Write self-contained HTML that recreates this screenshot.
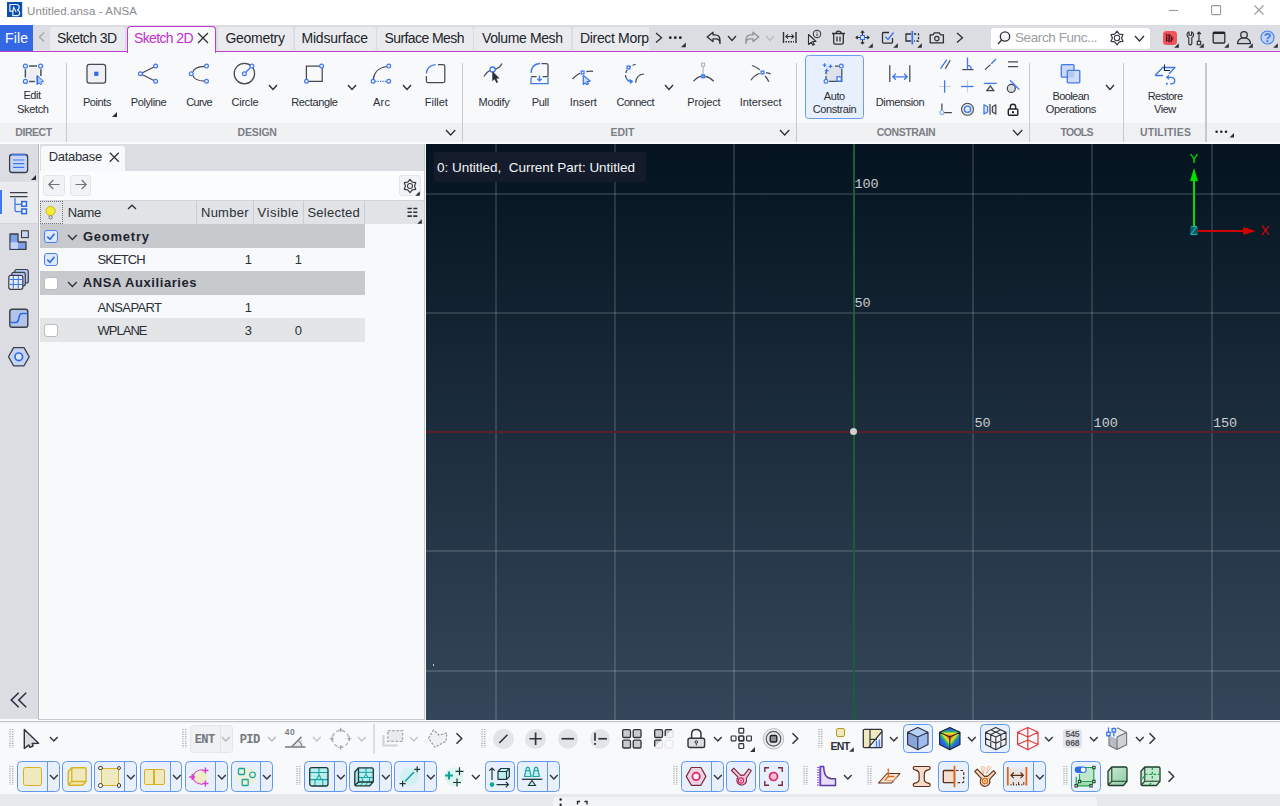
<!DOCTYPE html>
<html><head><meta charset="utf-8"><title>Untitled.ansa - ANSA</title>
<style>
html,body{margin:0;padding:0;}
body{width:1280px;height:806px;position:relative;overflow:hidden;background:#f8f9fb;font-family:"Liberation Sans",sans-serif;}
.b{position:absolute;box-sizing:border-box;}
.t{position:absolute;white-space:pre;}
svg{overflow:visible;}
</style></head><body>
<div class="b" style="left:0px;top:0px;width:1280px;height:25px;background:#ffffff;"></div>
<div class="b" style="left:0px;top:25px;width:1280px;height:26px;background:#dbdde2;"></div>
<div class="b" style="left:0px;top:49.7px;width:1280px;height:1px;background:#e6e9ec;"></div>
<div class="b" style="left:0px;top:50.7px;width:1280px;height:1.4px;background:#c43bd0;"></div>
<div class="b" style="left:0px;top:52px;width:1280px;height:71px;background:#f8f9fb;"></div>
<div class="b" style="left:0px;top:123px;width:1280px;height:19px;background:#f0f1f3;"></div>
<div class="b" style="left:0px;top:142px;width:1280px;height:2px;background:#fbfbfc;"></div>
<div class="b" style="left:0px;top:144px;width:38px;height:575.2px;background:#dbdde2;"></div>
<div class="b" style="left:38px;top:144px;width:388px;height:576px;background:#f8f9fb;"></div>
<div class="b" style="left:0px;top:720px;width:1280px;height:74px;background:#f8f9fb;"></div>
<div class="b" style="left:0px;top:794px;width:1280px;height:12px;background:#e4e5e8;"></div>
<svg class="b" style="left:6.7px;top:2px;" width="15.2" height="15" viewBox="0 0 15.2 15" fill="none"><rect width="15.200" height="15" fill="#0a4fae"/>
<path d="M2.900 2.500h6c2.200 0 3.300 1.200 3.300 2.800 0 1.300-.6 2.200-1.800 2.700 1.600.5 2.300 1.500 2.300 2.900 0 1.800-1.400 2.800-3.600 2.800H5.800V9.200H2.900z" stroke="#f2f6fc" stroke-width="1.150" stroke-linejoin="round"/>
<path d="M5.800 9.600l.9-4.300 2.500 4.700" stroke="#f2f6fc" stroke-width="1.100"/></svg>
<div class="t" style="left:27px;top:4.81px;font-size:11.5px;line-height:13.22px;color:#8a8c90;font-weight:normal;font-family:'Liberation Sans', sans-serif;"><span id="t1" style="letter-spacing:0.104px">Untitled.ansa - ANSA</span></div>
<svg class="b" style="left:1168px;top:4px;" width="100" height="14" viewBox="0 0 100 14" fill="none"><path d="M1 6.500h9" stroke="#9a9a9a" stroke-width="1.100"/>
<rect x="43.600" y="1.600" width="9" height="9" rx="0.800" stroke="#9a9a9a" stroke-width="1.100"/>
<path d="M86.500 1.500l9 9M95.500 1.500l-9 9" stroke="#9a9a9a" stroke-width="1.100"/></svg>
<div class="b" style="left:0px;top:25px;width:33px;height:26px;background:#3367e3;"></div>
<div class="t" style="left:5px;top:29.90px;font-size:14px;line-height:16.1px;color:#ffffff;font-weight:normal;font-family:'Liberation Sans', sans-serif;"><span id="t2" style="letter-spacing:0.146px">File</span></div>
<svg class="b" style="left:38px;top:31px;" width="8" height="12" viewBox="0 0 8 12" fill="none"><path d="M6 1.500L1.500 6l4.500 4.500" stroke="#a3a6ab" stroke-width="1.300"/></svg>
<div class="b" style="left:50px;top:27px;width:74.5px;height:22.5px;background:#eaebee;border-radius:3px;"></div>
<div class="t" style="left:57px;top:29.90px;font-size:14px;line-height:16.1px;color:#22252b;font-weight:normal;font-family:'Liberation Sans', sans-serif;"><span id="t3" style="letter-spacing:-0.574px">Sketch 3D</span></div>
<div class="b" style="left:217.5px;top:27px;width:75.0px;height:22.5px;background:#eaebee;border-radius:3px;"></div>
<div class="t" style="left:225.5px;top:29.90px;font-size:14px;line-height:16.1px;color:#22252b;font-weight:normal;font-family:'Liberation Sans', sans-serif;"><span id="t4" style="letter-spacing:-0.282px">Geometry</span></div>
<div class="b" style="left:294.5px;top:27px;width:81.0px;height:22.5px;background:#eaebee;border-radius:3px;"></div>
<div class="t" style="left:301.5px;top:29.90px;font-size:14px;line-height:16.1px;color:#22252b;font-weight:normal;font-family:'Liberation Sans', sans-serif;"><span id="t5" style="letter-spacing:-0.219px">Midsurface</span></div>
<div class="b" style="left:377px;top:27px;width:95.5px;height:22.5px;background:#eaebee;border-radius:3px;"></div>
<div class="t" style="left:384.5px;top:29.90px;font-size:14px;line-height:16.1px;color:#22252b;font-weight:normal;font-family:'Liberation Sans', sans-serif;"><span id="t6" style="letter-spacing:-0.580px">Surface Mesh</span></div>
<div class="b" style="left:474px;top:27px;width:96.5px;height:22.5px;background:#eaebee;border-radius:3px;"></div>
<div class="t" style="left:482px;top:29.90px;font-size:14px;line-height:16.1px;color:#22252b;font-weight:normal;font-family:'Liberation Sans', sans-serif;"><span id="t7" style="letter-spacing:-0.383px">Volume Mesh</span></div>
<div class="b" style="left:572.5px;top:27px;width:76.5px;height:22.5px;background:#eaebee;border-radius:3px 0 0 3px;"></div>
<div class="t" style="left:580px;top:29.90px;font-size:14px;line-height:16.1px;color:#22252b;font-weight:normal;font-family:'Liberation Sans', sans-serif;"><span id="t8" style="letter-spacing:-0.335px">Direct Morp</span></div>
<div class="b" style="left:126.5px;top:25.5px;width:89.5px;height:27px;background:#f8f9fb;border:1.300px solid #c43bd0;border-bottom:none;border-radius:4px 4px 0 0;"></div>
<div class="t" style="left:134px;top:29.90px;font-size:14px;line-height:16.1px;color:#c130cf;font-weight:normal;font-family:'Liberation Sans', sans-serif;"><span id="t9" style="letter-spacing:-0.637px">Sketch 2D</span></div>
<svg class="b" style="left:197px;top:32px;" width="12" height="12" viewBox="0 0 12 12" fill="none"><path d="M1 1l10 10M11 1L1 11" stroke="#2b2f36" stroke-width="1.300"/></svg>
<svg class="b" style="left:654px;top:32px;" width="10" height="12" viewBox="0 0 10 12" fill="none"><path d="M2 1l5.500 4.700L2 10.500" stroke="#2b2f36" stroke-width="1.300"/></svg>
<svg class="b" style="left:668px;top:34px;" width="20" height="14" viewBox="0 0 20 14" fill="none"><circle cx="2.300" cy="3.700" r="1.400" fill="#1d2026"/><circle cx="7.300" cy="3.700" r="1.400" fill="#1d2026"/><circle cx="12.300" cy="3.700" r="1.400" fill="#1d2026"/><path d="M17.800 8.500v4.800h-4.800z" fill="#2b2f36"/></svg>
<svg class="b" style="left:706px;top:31px;" width="16" height="14" viewBox="0 0 16 14" fill="none"><path d="M7 1.200L1.200 6 7 10.500V7.800h3.200c2.300 0 3.600 1.600 3.800 4.700V9.200C14 5.800 12.300 3.800 9.300 3.800H7z" stroke="#2b2f36" stroke-width="1.300" stroke-linejoin="round"/></svg>
<svg class="b" style="left:727.0px;top:35.25px;" width="10" height="6.5" viewBox="0 0 10 6.5" fill="none"><path d="M1 1l4.0 4.5 4.0 -4.5" stroke="#2b2f36" stroke-width="1.3"/></svg>
<svg class="b" style="left:744px;top:31px;" width="16" height="14" viewBox="0 0 16 14" fill="none"><path d="M9 1.200L14.800 6 9 10.500V7.800H5.800C3.500 7.800 2.200 9.400 2 12.500V9.200C2 5.800 3.700 3.800 6.700 3.800H9z" stroke="#8d9096" stroke-width="1.300" stroke-linejoin="round"/></svg>
<svg class="b" style="left:764.5px;top:35.25px;" width="10" height="6.5" viewBox="0 0 10 6.5" fill="none"><path d="M1 1l4.0 4.5 4.0 -4.5" stroke="#b9bbc0" stroke-width="1.3"/></svg>
<svg class="b" style="left:782px;top:31px;" width="16" height="13" viewBox="0 0 16 13" fill="none"><path d="M1.500 1v11M14 1v11" stroke="#2b2f36" stroke-width="1.400"/><path d="M4 5.500h7.500M6 3.300L3.800 5.500 6 7.700M9.500 3.300l2.200 2.200-2.200 2.200" stroke="#2b2f36" stroke-width="1.100"/><path d="M3.500 10.800h8.500" stroke="#2b2f36" stroke-width="1.400" stroke-dasharray="1.500 1"/></svg>
<svg class="b" style="left:806px;top:29px;" width="17" height="17" viewBox="0 0 17 17" fill="none"><path d="M2.500 5.500v10l2.800-2.300 1.600 3 1.400-.7-1.600-3h3.300z" stroke="#2b2f36" stroke-width="1.100" fill="#dcdde1" stroke-linejoin="round"/><circle cx="11" cy="5" r="3.800" stroke="#2b2f36" stroke-width="1" fill="#dcdde1"/><path d="M11 4.500v2.700" stroke="#2b2f36" stroke-width="1"/><circle cx="11" cy="3" r=".6" fill="#2b2f36"/></svg>
<svg class="b" style="left:831px;top:30px;" width="15" height="15" viewBox="0 0 15 15" fill="none"><path d="M1 3.500h13M5 3.300c0-1.400.9-2.100 2.500-2.100s2.500.7 2.500 2.100M2.700 3.700v8.800c0 1 .6 1.600 1.600 1.600h6.400c1 0 1.600-.6 1.600-1.600V3.700" stroke="#2b2f36" stroke-width="1.300"/><path d="M6 6.500v5M9 6.500v5" stroke="#2b2f36" stroke-width="1.300"/></svg>
<svg class="b" style="left:855px;top:30px;" width="15" height="15" viewBox="0 0 15 15" fill="none"><path d="M7.500 1v13M1 7.500h13" stroke="#2b2f36" stroke-width="1.100"/><path d="M5.800 2.800L7.500 1l1.700 1.800M5.800 12.200L7.500 14l1.700-1.800M2.800 5.800L1 7.500l1.800 1.700M12.200 5.800L14 7.500l-1.800 1.700" stroke="#2b2f36" stroke-width="1.100"/><rect x="5.500" y="5.500" width="4" height="4" fill="#dfe8fb" stroke="#3c74ea" stroke-width="1.100"/></svg>
<svg class="b" style="left:868px;top:42.5px;" width="5" height="5" viewBox="0 0 5 5" fill="none"><path d="M4.800 0.200v4.600H0.200z" fill="#2b2f36"/></svg>
<svg class="b" style="left:881px;top:30px;" width="15" height="15" viewBox="0 0 15 15" fill="none"><path d="M11.500 8v4c0 .8-.4 1.200-1.200 1.200H2.700c-.8 0-1.200-.4-1.200-1.200V3.700c0-.8.400-1.200 1.200-1.200H8" stroke="#2b2f36" stroke-width="1.300"/><path d="M4.300 6.800L7 9.500l5.500-7" stroke="#3c74ea" stroke-width="1.300"/></svg>
<svg class="b" style="left:892.5px;top:42.5px;" width="5" height="5" viewBox="0 0 5 5" fill="none"><path d="M4.800 0.200v4.600H0.200z" fill="#2b2f36"/></svg>
<svg class="b" style="left:904px;top:30px;" width="17" height="15" viewBox="0 0 17 15" fill="none"><path d="M7 4H2v7h5" stroke="#2b2f36" stroke-width="1.300"/><path d="M10 4h4.500v7H10" stroke="#2b2f36" stroke-width="1.300" stroke-dasharray="2.200 1.600"/><path d="M8.300 1v13.500" stroke="#3c74ea" stroke-width="1.800"/></svg>
<svg class="b" style="left:917px;top:42.5px;" width="5" height="5" viewBox="0 0 5 5" fill="none"><path d="M4.800 0.200v4.600H0.200z" fill="#2b2f36"/></svg>
<svg class="b" style="left:929px;top:31px;" width="16" height="13" viewBox="0 0 16 13" fill="none"><path d="M1.200 3.800h3l1.100-2h5l1.100 2h3v8H1.200z" stroke="#2b2f36" stroke-width="1.300" stroke-linejoin="round"/><circle cx="7.800" cy="7.600" r="2.200" stroke="#2b2f36" stroke-width="1.200"/></svg>
<svg class="b" style="left:955px;top:32px;" width="10" height="12" viewBox="0 0 10 12" fill="none"><path d="M2 1l5.500 4.700L2 10.500" stroke="#2b2f36" stroke-width="1.300"/></svg>
<div class="b" style="left:991px;top:28px;width:159px;height:20.5px;background:#ffffff;border-radius:3px;"></div>
<svg class="b" style="left:997px;top:30px;" width="14" height="15" viewBox="0 0 14 15" fill="none"><circle cx="8" cy="6.500" r="4.700" stroke="#2b2f36" stroke-width="1.300" fill="#f4f5f7"/><path d="M4.600 10L1 14" stroke="#2b2f36" stroke-width="1.300"/></svg>
<div class="t" style="left:1015px;top:30.36px;font-size:13.5px;line-height:15.52px;color:#9a9da3;font-weight:normal;font-family:'Liberation Sans', sans-serif;"><span id="t10" style="letter-spacing:-0.407px">Search Func...</span></div>
<svg class="b" style="left:1108.8px;top:29.8px;" width="16" height="16" viewBox="0 0 16 16" fill="none"><path d="M8.00,1.10L10.30,4.02L13.98,4.55L12.60,8.00L13.98,11.45L10.30,11.98L8.00,14.90L5.70,11.98L2.02,11.45L3.40,8.00L2.02,4.55L5.70,4.02z" stroke="#3a3e46" stroke-width="1.250" stroke-linejoin="round"/><circle cx="8" cy="8" r="2.700" stroke="#3a3e46" stroke-width="1.100"/></svg>
<svg class="b" style="left:1134.0px;top:35.0px;" width="11" height="7" viewBox="0 0 11 7" fill="none"><path d="M1 1l4.5 5 4.5 -5" stroke="#2b2f36" stroke-width="1.3"/></svg>
<div class="b" style="left:1162.5px;top:31px;width:14px;height:13.5px;background:#f2545c;border-radius:3.500px;"></div>
<svg class="b" style="left:1165px;top:33px;" width="10" height="10" viewBox="0 0 10 10" fill="none"><path d="M1 1l7 6M1 3.500l6 5M1 6l4 3.200M3.500 1l5 4.300M1.500 1v8M4 2.500v6.500M6.500 4.500v4.500" stroke="#4a0c12" stroke-width="1.150" stroke-dasharray="1.400 .5"/></svg>
<svg class="b" style="left:1174px;top:42.5px;" width="5" height="5" viewBox="0 0 5 5" fill="none"><path d="M4.800 0.200v4.600H0.200z" fill="#2b2f36"/></svg>
<svg class="b" style="left:1186px;top:30px;" width="18" height="16" viewBox="0 0 18 16" fill="none"><path d="M3 1.800v3.400h2.600V1.800c1.200.5 2 1.600 2 3 0 1.300-.7 2.300-1.800 2.800v6c0 .8-.5 1.300-1.500 1.300s-1.500-.5-1.500-1.300v-6C1.700 7.100 1 6.100 1 4.800c0-1.400.8-2.500 2-3z" stroke="#2b2f36" stroke-width="1.150" stroke-linejoin="round"/><path d="M13 2v9.500M11.200 4L13 2l1.800 2" stroke="#2b2f36" stroke-width="1.150"/><rect x="11.300" y="11.300" width="3.400" height="3.400" stroke="#2b2f36" stroke-width="1.150"/></svg>
<svg class="b" style="left:1199px;top:42.5px;" width="5" height="5" viewBox="0 0 5 5" fill="none"><path d="M4.800 0.200v4.600H0.200z" fill="#2b2f36"/></svg>
<svg class="b" style="left:1212px;top:31px;" width="15" height="14" viewBox="0 0 15 14" fill="none"><rect x="1.200" y="1.200" width="11.600" height="10.800" rx="1" stroke="#2b2f36" stroke-width="1.300" fill="#d0d3da"/><path d="M1.200 2h11.600" stroke="#1d2026" stroke-width="2"/></svg>
<svg class="b" style="left:1224px;top:42.5px;" width="5" height="5" viewBox="0 0 5 5" fill="none"><path d="M4.800 0.200v4.600H0.200z" fill="#2b2f36"/></svg>
<svg class="b" style="left:1236px;top:30px;" width="16" height="15" viewBox="0 0 16 15" fill="none"><circle cx="8" cy="4.800" r="3.300" stroke="#2b2f36" stroke-width="1.250" fill="#d0d3da"/><path d="M1.500 13.500c.3-3 2.400-4.700 4-5.300h5c1.600.6 3.700 2.300 4 5.300z" stroke="#2b2f36" stroke-width="1.250" fill="#d0d3da" stroke-linejoin="round"/></svg>
<svg class="b" style="left:1248px;top:42.5px;" width="5" height="5" viewBox="0 0 5 5" fill="none"><path d="M4.800 0.200v4.600H0.200z" fill="#2b2f36"/></svg>
<svg class="b" style="left:1260px;top:30px;" width="15" height="15" viewBox="0 0 15 15" fill="none"><circle cx="7.500" cy="7.500" r="6.500" stroke="#4a80ee" stroke-width="1.200" fill="#c5d3f2"/></svg>
<div class="t" style="left:1067.6px;width:400px;text-align:center;top:30.78px;font-size:12.5px;line-height:14.37px;color:#3c74ea;font-weight:bold;font-family:'Liberation Sans', sans-serif;">?</div>
<svg class="b" style="left:1273px;top:42.5px;" width="5" height="5" viewBox="0 0 5 5" fill="none"><path d="M4.800 0.200v4.600H0.200z" fill="#2b2f36"/></svg>
<div class="b" style="left:65.9px;top:62.5px;width:1.2px;height:79px;background:#c6c9ce;"></div>
<div class="b" style="left:461.9px;top:62.5px;width:1.2px;height:79px;background:#c6c9ce;"></div>
<div class="b" style="left:795.9px;top:62.5px;width:1.2px;height:79px;background:#c6c9ce;"></div>
<div class="b" style="left:1028.9px;top:62.5px;width:1.2px;height:79px;background:#c6c9ce;"></div>
<div class="b" style="left:1122.9px;top:62.5px;width:1.2px;height:79px;background:#c6c9ce;"></div>
<div class="b" style="left:1205.4px;top:62.5px;width:1.2px;height:79px;background:#c6c9ce;"></div>
<svg class="b" style="left:0px;top:52px;" width="1280" height="72" viewBox="0 0 1280 72" fill="none">
<rect x="27.400" y="16" width="11.200" height="11.600" fill="#eceef1"/>
<path d="M28.900 14.100h8.100M25.400 17.300v8.300M28.900 29.400h6M40.900 17.300v6.700" stroke="#4b505c" stroke-width="1.500"/>
<circle cx="25.4" cy="14.1" r="2" stroke="#3f78ee" stroke-width="1.2" fill="#eef2fd"/><circle cx="40.6" cy="14.1" r="2" stroke="#3f78ee" stroke-width="1.2" fill="#eef2fd"/><circle cx="25.4" cy="29.4" r="2" stroke="#3f78ee" stroke-width="1.2" fill="#eef2fd"/>
<path d="M37.300 23.700v8.700l2-1.500 1.300 1.700 1.300-.9-1-1.700 2.900-.6z" fill="#b4c9f6" stroke="#3f78ee" stroke-width="1" stroke-linejoin="round"/>
<path d="M37.300 23.700v8.700" stroke="#2f6be8" stroke-width="1.500"/>
<!-- Points -->
<rect x="87" y="12.400" width="18.600" height="18.600" rx="2.300" fill="#eef0f3" stroke="#454952" stroke-width="1.25" stroke-width="1.400"/>
<rect x="94.200" y="19.700" width="4.200" height="4.200" fill="#2f6be8"/>
<path d="M117 60v5h-5z" fill="#2b2f36"/>
<!-- Polyline -->
<path d="M153.900 15L142 21M142 22.500L153.900 28.500" stroke="#454952" stroke-width="1.25"/>
<circle cx="155.6" cy="14.1" r="1.9" stroke="#3f78ee" stroke-width="1.2" fill="#eef2fd"/><circle cx="140.4" cy="21.75" r="1.9" stroke="#3f78ee" stroke-width="1.2" fill="#eef2fd"/><circle cx="155.6" cy="29.3" r="1.9" stroke="#3f78ee" stroke-width="1.2" fill="#eef2fd"/>
<!-- Curve -->
<path d="M204.600 14.300C197 14.600 193.500 17.500 193 20M193 23.500C193.500 26 197 28.800 204.600 29.100" stroke="#454952" stroke-width="1.25"/>
<circle cx="206.5" cy="14.1" r="1.9" stroke="#3f78ee" stroke-width="1.2" fill="#eef2fd"/><circle cx="191.25" cy="21.75" r="1.9" stroke="#3f78ee" stroke-width="1.2" fill="#eef2fd"/><circle cx="206.5" cy="29.3" r="1.9" stroke="#3f78ee" stroke-width="1.2" fill="#eef2fd"/>
<!-- Circle -->
<circle cx="244.400" cy="21.600" r="10.200" stroke="#454952" stroke-width="1.25"/>
<path d="M245.800 20.300L250.500 15.500" stroke="#3f78ee" stroke-width="1.3"/>
<circle cx="244.4" cy="21.75" r="1.9" stroke="#3f78ee" stroke-width="1.2" fill="#eef2fd"/><circle cx="251.9" cy="14.1" r="1.9" stroke="#3f78ee" stroke-width="1.2" fill="#eef2fd"/>
<!-- Rectangle -->
<path d="M319.700 14.100H306.400V27.300M308.500 29.300H322.200V16" stroke="#454952" stroke-width="1.25" stroke-width="1.400"/>
<circle cx="321.6" cy="14.1" r="1.9" stroke="#3f78ee" stroke-width="1.2" fill="#eef2fd"/><circle cx="306.5" cy="29.3" r="1.9" stroke="#3f78ee" stroke-width="1.2" fill="#eef2fd"/>
<!-- Arc -->
<path d="M373.300 27.300C374 20.500 379 15.500 386.800 14.500" stroke="#454952" stroke-width="1.25"/>
<path d="M375.200 29.300H386.800" stroke="#3f78ee" stroke-width="1.3" stroke-width="1.500" stroke-dasharray="1.300 1.100"/>
<circle cx="388.75" cy="14.1" r="1.9" stroke="#3f78ee" stroke-width="1.2" fill="#eef2fd"/><circle cx="373.1" cy="29.3" r="1.9" stroke="#3f78ee" stroke-width="1.2" fill="#eef2fd"/><circle cx="388.75" cy="29.3" r="1.9" stroke="#3f78ee" stroke-width="1.2" fill="#eef2fd"/>
<!-- Fillet -->
<path d="M438 12.700h5c1.200 0 1.800.6 1.800 1.800v14.400c0 1.200-.6 1.800-1.800 1.800h-14.800c-1.200 0-1.800-.6-1.800-1.800V24" stroke="#454952" stroke-width="1.25" stroke-width="1.400"/>
<path d="M426.400 21.500C426.800 16.500 430 13.200 435.500 12.700" stroke="#3f78ee" stroke-width="1.3" stroke-width="1.500"/>
<!-- Modify -->
<path d="M484 24.500C486 21 488.500 19 490.500 18.300M494.800 17.300C498 16.500 500.500 14.500 502 11.400" stroke="#454952" stroke-width="1.25" stroke-width="1.200"/>
<circle cx="492.600" cy="17.600" r="2.600" stroke="#3f78ee" stroke-width="1.3" stroke-width="1.200" fill="none"/>
<path d="M492.300 19v10.300l2.300-2 1.800 3.700 1.700-.8-1.700-3.600h3.200z" fill="#2b2f36"/>
<!-- Pull -->
<path d="M541.500 11.500h4.700c1.200 0 1.800.6 1.800 1.800V24.500" stroke="#454952" stroke-width="1.25" stroke-width="1.400"/>
<path d="M531 24.500h5.500M542.500 24.500H548" stroke="#454952" stroke-width="1.25" stroke-width="1.400"/>
<path d="M531 21C531.200 15.500 534.500 11.800 540 11.500" stroke="#3f78ee" stroke-width="1.3" stroke-width="1.400"/>
<path d="M531 25.500v6.200h17v-6.200" stroke="#3f78ee" stroke-width="1.3" stroke-width="1.400"/>
<path d="M539.500 23.500v5M537.300 26.700l2.200 2.200 2.200-2.200" stroke="#3f78ee" stroke-width="1.3" stroke-width="1.200"/>
<!-- Insert -->
<path d="M572.500 27C575 24.500 577.500 22.500 580 21.300M586.300 19.600C588.500 19.200 590.500 19.100 593 19.300" stroke="#454952" stroke-width="1.25" stroke-width="1.200"/>
<rect x="581.200" y="19.100" width="2.800" height="2.800" fill="#fff" stroke="#3f78ee" stroke-width="1.3" stroke-width="1.100"/>
<path d="M583.300 23.500v9l2.200-1.700 1.500 1.800 1.500-1-1.300-2 3-.6z" fill="#d5e1fb" stroke="#3f78ee" stroke-width="1.3" stroke-width="1.100" stroke-linejoin="round"/>
<!-- Connect -->
<path d="M635.800 12.500C631 13 626 17 625.500 22.500 625.400 24 625.700 25.200 626.200 26" stroke="#454952" stroke-width="1.25" stroke-width="1.300" stroke-dasharray="3.300 2"/>
<rect x="627.100" y="14.100" width="2.800" height="2.800" fill="#fff" stroke="#3f78ee" stroke-width="1.3" stroke-width="1.100"/>
<path d="M626.300 25.500C627 28.500 629 29.800 632 29.400M629.500 27.500L632.300 29.300 630 31.600" stroke="#3f78ee" stroke-width="1.3" stroke-width="1.200"/>
<path d="M635.600 30.800C636 25.500 639 22.400 644 22" stroke="#454952" stroke-width="1.25" stroke-width="1.300"/>
<!-- Project -->
<rect x="701.600" y="11.100" width="3" height="3" stroke="#a9acb2" stroke-width="1"/>
<path d="M703.100 14.300V22.500" stroke="#a9acb2" stroke-width="1"/>
<path d="M693.500 29.300C696 26.500 699 24.700 701 24.400M705.300 24.400C707.500 24.700 711 26.500 713.700 29.300" stroke="#454952" stroke-width="1.25" stroke-width="1.200"/>
<rect x="701.700" y="22.900" width="2.800" height="2.800" fill="#7da3f3" stroke="#3f78ee" stroke-width="1.3" stroke-width="1.100"/>
<!-- Intersect -->
<path d="M751.900 13.500C755 14.300 757.500 15.800 759.700 17.700M766 20.600C767.500 20.800 769 21.200 770.600 21.800M751 28.300C753 24.800 756 22.600 759.700 21.500M765 24C766.500 25.500 768 27.500 768.800 29.800" stroke="#454952" stroke-width="1.25" stroke-width="1.200"/>
<rect x="761.100" y="19.100" width="2.800" height="2.800" fill="#fff" stroke="#3f78ee" stroke-width="1.3" stroke-width="1.100"/>
</svg>
<div class="t" style="left:-168px;width:400px;text-align:center;top:89.16px;font-size:11px;line-height:12.65px;color:#2b2f36;font-weight:normal;font-family:'Liberation Sans', sans-serif;"><span id="t12" style="letter-spacing:-0.485px">Edit</span></div>
<div class="t" style="left:-167.2px;width:400px;text-align:center;top:102.76px;font-size:11px;line-height:12.65px;color:#2b2f36;font-weight:normal;font-family:'Liberation Sans', sans-serif;"><span id="t13" style="letter-spacing:-0.329px">Sketch</span></div>
<div class="t" style="left:-103px;width:400px;text-align:center;top:95.76px;font-size:11px;line-height:12.65px;color:#2b2f36;font-weight:normal;font-family:'Liberation Sans', sans-serif;"><span id="t14" style="letter-spacing:-0.416px">Points</span></div>
<div class="t" style="left:-51.5px;width:400px;text-align:center;top:95.76px;font-size:11px;line-height:12.65px;color:#2b2f36;font-weight:normal;font-family:'Liberation Sans', sans-serif;"><span id="t15" style="letter-spacing:-0.362px">Polyline</span></div>
<div class="t" style="left:-0.9000000000000057px;width:400px;text-align:center;top:95.76px;font-size:11px;line-height:12.65px;color:#2b2f36;font-weight:normal;font-family:'Liberation Sans', sans-serif;"><span id="t16" style="letter-spacing:-0.763px">Curve</span></div>
<div class="t" style="left:44.900000000000006px;width:400px;text-align:center;top:95.76px;font-size:11px;line-height:12.65px;color:#2b2f36;font-weight:normal;font-family:'Liberation Sans', sans-serif;"><span id="t17" style="letter-spacing:-0.185px">Circle</span></div>
<svg class="b" style="left:267.6px;top:84.05px;" width="10" height="6.5" viewBox="0 0 10 6.5" fill="none"><path d="M1 1l4.0 4.5 4.0 -4.5" stroke="#2b2f36" stroke-width="1.3"/></svg>
<div class="t" style="left:114.39999999999998px;width:400px;text-align:center;top:95.76px;font-size:11px;line-height:12.65px;color:#2b2f36;font-weight:normal;font-family:'Liberation Sans', sans-serif;"><span id="t18" style="letter-spacing:-0.343px">Rectangle</span></div>
<svg class="b" style="left:347.0px;top:84.05px;" width="10" height="6.5" viewBox="0 0 10 6.5" fill="none"><path d="M1 1l4.0 4.5 4.0 -4.5" stroke="#2b2f36" stroke-width="1.3"/></svg>
<div class="t" style="left:181.5px;width:400px;text-align:center;top:95.76px;font-size:11px;line-height:12.65px;color:#2b2f36;font-weight:normal;font-family:'Liberation Sans', sans-serif;"><span id="t19" style="letter-spacing:0.250px">Arc</span></div>
<svg class="b" style="left:401.7px;top:84.05px;" width="10" height="6.5" viewBox="0 0 10 6.5" fill="none"><path d="M1 1l4.0 4.5 4.0 -4.5" stroke="#2b2f36" stroke-width="1.3"/></svg>
<div class="t" style="left:236.3px;width:400px;text-align:center;top:95.76px;font-size:11px;line-height:12.65px;color:#2b2f36;font-weight:normal;font-family:'Liberation Sans', sans-serif;"><span id="t20" style="letter-spacing:-0.045px">Fillet</span></div>
<div class="t" style="left:294.1px;width:400px;text-align:center;top:95.76px;font-size:11px;line-height:12.65px;color:#2b2f36;font-weight:normal;font-family:'Liberation Sans', sans-serif;"><span id="t21" style="letter-spacing:-0.242px">Modify</span></div>
<div class="t" style="left:340.29999999999995px;width:400px;text-align:center;top:95.76px;font-size:11px;line-height:12.65px;color:#2b2f36;font-weight:normal;font-family:'Liberation Sans', sans-serif;"><span id="t22" style="letter-spacing:-0.282px">Pull</span></div>
<div class="t" style="left:383.29999999999995px;width:400px;text-align:center;top:95.76px;font-size:11px;line-height:12.65px;color:#2b2f36;font-weight:normal;font-family:'Liberation Sans', sans-serif;"><span id="t23" style="letter-spacing:-0.083px">Insert</span></div>
<div class="t" style="left:435.29999999999995px;width:400px;text-align:center;top:95.76px;font-size:11px;line-height:12.65px;color:#2b2f36;font-weight:normal;font-family:'Liberation Sans', sans-serif;"><span id="t24" style="letter-spacing:-0.480px">Connect</span></div>
<svg class="b" style="left:663.9px;top:84.05px;" width="10" height="6.5" viewBox="0 0 10 6.5" fill="none"><path d="M1 1l4.0 4.5 4.0 -4.5" stroke="#2b2f36" stroke-width="1.3"/></svg>
<div class="t" style="left:503.9px;width:400px;text-align:center;top:95.76px;font-size:11px;line-height:12.65px;color:#2b2f36;font-weight:normal;font-family:'Liberation Sans', sans-serif;"><span id="t25" style="letter-spacing:-0.140px">Project</span></div>
<div class="t" style="left:560.6px;width:400px;text-align:center;top:95.76px;font-size:11px;line-height:12.65px;color:#2b2f36;font-weight:normal;font-family:'Liberation Sans', sans-serif;"><span id="t26" style="letter-spacing:-0.062px">Intersect</span></div>
<div class="b" style="left:804.8px;top:55.3px;width:59px;height:63.5px;background:#e8effd;border:1.100px solid #6a9df2;border-radius:3.500px;"></div>
<svg class="b" style="left:0px;top:52px;" width="1280" height="72" viewBox="0 0 1280 72" fill="none">
<rect x="826" y="14.100" width="15.600" height="15.300" fill="#dde2ed"/>
<path d="M841.800 17v12.400H829" stroke="#454952" stroke-width="1.25" stroke-width="1.400"/>
<path d="M826 19.500v8" stroke="#454952" stroke-width="1.25" stroke-width="1.400" stroke-dasharray="2.800 1.800"/>
<path d="M835 14.100h3.500" stroke="#454952" stroke-width="1.25" stroke-width="1.400"/>
<rect x="837" y="24.800" width="4.300" height="4.300" fill="#f2f6fe" stroke="#3f78ee" stroke-width="1.3" stroke-width="1.100"/>
<circle cx="841.3" cy="14.1" r="1.9" stroke="#3f78ee" stroke-width="1.2" fill="#eef2fd"/><circle cx="826" cy="29.3" r="1.9" stroke="#3f78ee" stroke-width="1.2" fill="#eef2fd"/>
<path d="M824.600 11.300v3.600M822.800 13.100h3.600M830.500 12.500v3.600M828.700 14.300h3.600M826.600 16.800v3.600M824.800 18.600h3.600" stroke="#3f78ee" stroke-width="1.3" stroke-width="1.100"/>
<!-- Dimension -->
<path d="M889.800 13.300V30M909.800 13.300V30" stroke="#454952" stroke-width="1.25" stroke-width="1.500"/>
<path d="M893 24.800h14M895.800 21.800l-3 3 3 3M904.200 21.800l3 3-3 3" stroke="#3f78ee" stroke-width="1.3" stroke-width="1.300"/>
<!-- small grid row1 -->
<path d="M940.600 16.700L946.800 7.700" stroke="#3f78ee" stroke-width="1.3"/><path d="M945.300 16.700L950.200 8.200" stroke="#454952" stroke-width="1.25" stroke-width="1.200"/>
<path d="M962.300 17.600h11.200" stroke="#454952" stroke-width="1.25" stroke-width="1.300"/><path d="M967.500 5.500v12M967.500 13.300c2.200 0 3.600 1.400 3.600 4" stroke="#3f78ee" stroke-width="1.3" stroke-width="1.300"/>
<path d="M985 17.600l5.500-5" stroke="#454952" stroke-width="1.25" stroke-width="1.200"/><path d="M991.300 11.800L996 7" stroke="#3f78ee" stroke-width="1.3" stroke-width="1.200"/>
<path d="M1008 9.800h10M1008 14.600h10" stroke="#454952" stroke-width="1.25" stroke-width="1.400"/>
<!-- row2 -->
<path d="M939 34.500h12" stroke="#c9ccd1" stroke-width="1"/><path d="M944.600 28.300v12.500" stroke="#3f78ee" stroke-width="1.3" stroke-width="1.400"/>
<path d="M967.500 28.500v12" stroke="#c9ccd1" stroke-width="1"/><path d="M961 34.500h12.500" stroke="#3f78ee" stroke-width="1.3" stroke-width="1.400"/>
<path d="M983.800 31.400h13" stroke="#3f78ee" stroke-width="1.3" stroke-width="1.400"/><path d="M990.300 33.800l3.500 4.800h-7z" stroke="#454952" stroke-width="1.25" stroke-width="1.200" fill="#e3e5e9"/>
<circle cx="1011.300" cy="36.400" r="4" stroke="#454952" stroke-width="1.25" stroke-width="1.300" fill="#dcdee2"/><path d="M1010 28.300l9.400 9.300" stroke="#3f78ee" stroke-width="1.3" stroke-width="1.300"/>
<!-- row3 -->
<path d="M941.900 51.400v9.100h10" stroke="#454952" stroke-width="1.25" stroke-width="1.400"/><circle cx="941.900" cy="60.500" r="2" stroke="#8fb0f5" stroke-width="1.100" fill="#f0f4fe"/>
<circle cx="967.500" cy="57.300" r="6" stroke="#4a4e56" stroke-width="1.100" fill="#dfe1e5"/><circle cx="967.500" cy="57.300" r="3.100" stroke="#3f78ee" stroke-width="1.3" stroke-width="1.500" fill="#e6edfc"/>
<path d="M984 52.800v9.200l3.600-2v-5.200z" stroke="#3f78ee" stroke-width="1.3" stroke-width="1.300" fill="#dfe8fc" stroke-linejoin="round"/><path d="M990 52v10.800" stroke="#454952" stroke-width="1.25" stroke-width="1.600"/><path d="M995.800 52.800v9.200l-3.400-2v-5.200z" stroke="#454952" stroke-width="1.25" stroke-width="1.200" fill="#e3e5e9" stroke-linejoin="round"/>
<rect x="1008.300" y="57" width="9.500" height="6.200" rx="1" stroke="#1f2228" stroke-width="1.400"/><path d="M1010.300 57v-2c0-1.700 1-2.700 2.700-2.700s2.700 1 2.700 2.700v2" stroke="#1f2228" stroke-width="1.400"/><rect x="1012" y="59.200" width="2" height="2" fill="#1f2228"/>
<!-- Boolean -->
<rect x="1061.300" y="12.700" width="12.700" height="12.500" rx="1" fill="#cbd9f8" stroke="#3f78ee" stroke-width="1.3" stroke-width="1.300"/>
<rect x="1067.300" y="18.300" width="12.500" height="12.500" rx="1" fill="#cbd9f8" fill-opacity=".85" stroke="#3f78ee" stroke-width="1.3" stroke-width="1.300"/>
<rect x="1067.900" y="18.900" width="5.500" height="5.700" fill="#b3c7f3"/>
<!-- Restore view -->
<path d="M1155 23.500l7.700-8h12.300l-6 6.300M1155 23.500h8" stroke="#3f78ee" stroke-width="1.3" stroke-width="1.200" stroke-linejoin="round"/>
<path d="M1164.500 12.500v6h5.500" stroke="#1f2228" stroke-width="1.100"/>
<path d="M1167 25.300h3.800c2.600 0 4 1.300 4 3.300 0 2-1.400 3.300-3.600 3.300h-1.200M1169 23.200l-2.200 2.100 2.200 2.100" stroke="#3f78ee" stroke-width="1.3" stroke-width="1.300"/>
<rect x="1166" y="30.800" width="1.800" height="1.800" fill="#3f78ee"/>
</svg>
<div class="t" style="left:634.3px;width:400px;text-align:center;top:90.16px;font-size:11px;line-height:12.65px;color:#2b2f36;font-weight:normal;font-family:'Liberation Sans', sans-serif;"><span id="t27" style="letter-spacing:-0.376px">Auto</span></div>
<div class="t" style="left:634.5px;width:400px;text-align:center;top:102.76px;font-size:11px;line-height:12.65px;color:#2b2f36;font-weight:normal;font-family:'Liberation Sans', sans-serif;"><span id="t28" style="letter-spacing:-0.385px">Constrain</span></div>
<div class="t" style="left:700px;width:400px;text-align:center;top:95.76px;font-size:11px;line-height:12.65px;color:#2b2f36;font-weight:normal;font-family:'Liberation Sans', sans-serif;"><span id="t29" style="letter-spacing:-0.396px">Dimension</span></div>
<div class="t" style="left:870.5999999999999px;width:400px;text-align:center;top:90.16px;font-size:11px;line-height:12.65px;color:#2b2f36;font-weight:normal;font-family:'Liberation Sans', sans-serif;"><span id="t30" style="letter-spacing:-0.597px">Boolean</span></div>
<div class="t" style="left:870.8px;width:400px;text-align:center;top:102.76px;font-size:11px;line-height:12.65px;color:#2b2f36;font-weight:normal;font-family:'Liberation Sans', sans-serif;"><span id="t31" style="letter-spacing:-0.380px">Operations</span></div>
<svg class="b" style="left:1105.1px;top:84.05px;" width="10" height="6.5" viewBox="0 0 10 6.5" fill="none"><path d="M1 1l4.0 4.5 4.0 -4.5" stroke="#2b2f36" stroke-width="1.3"/></svg>
<div class="t" style="left:965.0999999999999px;width:400px;text-align:center;top:90.16px;font-size:11px;line-height:12.65px;color:#2b2f36;font-weight:normal;font-family:'Liberation Sans', sans-serif;"><span id="t32" style="letter-spacing:-0.537px">Restore</span></div>
<div class="t" style="left:964.9000000000001px;width:400px;text-align:center;top:102.76px;font-size:11px;line-height:12.65px;color:#2b2f36;font-weight:normal;font-family:'Liberation Sans', sans-serif;"><span id="t33" style="letter-spacing:-0.452px">View</span></div>
<div class="t" style="left:-166.5px;width:400px;text-align:center;top:126.03px;font-size:10.5px;line-height:12.07px;color:#7b7e86;font-weight:bold;font-family:'Liberation Sans', sans-serif;"><span id="t34" style="letter-spacing:-0.438px">DIRECT</span></div>
<div class="t" style="left:57.19999999999999px;width:400px;text-align:center;top:126.03px;font-size:10.5px;line-height:12.07px;color:#7b7e86;font-weight:bold;font-family:'Liberation Sans', sans-serif;"><span id="t35" style="letter-spacing:-0.173px">DESIGN</span></div>
<div class="t" style="left:422.5px;width:400px;text-align:center;top:126.03px;font-size:10.5px;line-height:12.07px;color:#7b7e86;font-weight:bold;font-family:'Liberation Sans', sans-serif;"><span id="t36" style="letter-spacing:-0.041px">EDIT</span></div>
<div class="t" style="left:705.9px;width:400px;text-align:center;top:126.03px;font-size:10.5px;line-height:12.07px;color:#7b7e86;font-weight:bold;font-family:'Liberation Sans', sans-serif;"><span id="t37" style="letter-spacing:-0.453px">CONSTRAIN</span></div>
<div class="t" style="left:876.5999999999999px;width:400px;text-align:center;top:126.03px;font-size:10.5px;line-height:12.07px;color:#7b7e86;font-weight:bold;font-family:'Liberation Sans', sans-serif;"><span id="t38" style="letter-spacing:-0.773px">TOOLS</span></div>
<div class="t" style="left:965.5px;width:400px;text-align:center;top:126.03px;font-size:10.5px;line-height:12.07px;color:#7b7e86;font-weight:bold;font-family:'Liberation Sans', sans-serif;"><span id="t39" style="letter-spacing:0.176px">UTILITIES</span></div>
<svg class="b" style="left:445.35px;top:129.3px;" width="11.3" height="7" viewBox="0 0 11.3 7" fill="none"><path d="M1 1l4.65 5 4.65 -5" stroke="#2b2f36" stroke-width="1.3"/></svg>
<svg class="b" style="left:779.25px;top:129.3px;" width="11.3" height="7" viewBox="0 0 11.3 7" fill="none"><path d="M1 1l4.65 5 4.65 -5" stroke="#2b2f36" stroke-width="1.3"/></svg>
<svg class="b" style="left:1012.25px;top:129.3px;" width="11.3" height="7" viewBox="0 0 11.3 7" fill="none"><path d="M1 1l4.65 5 4.65 -5" stroke="#2b2f36" stroke-width="1.3"/></svg>
<svg class="b" style="left:1214px;top:129px;" width="24" height="10" viewBox="0 0 24 10" fill="none"><circle cx="2.600" cy="2.700" r="1.250" fill="#1d2026"/><circle cx="7.300" cy="2.700" r="1.250" fill="#1d2026"/><circle cx="12" cy="2.700" r="1.250" fill="#1d2026"/><path d="M20 4v4.500h-4.500z" fill="#2b2f36"/></svg>
<div class="b" style="left:37.8px;top:144px;width:1.5px;height:575px;background:#b7bcc4;"></div>
<div class="b" style="left:39.3px;top:144px;width:0.7px;height:575px;background:#fbfcfd;"></div>
<div class="b" style="left:0px;top:182.3px;width:38px;height:1px;background:#eceef1;"></div>
<div class="b" style="left:0px;top:183.3px;width:38px;height:39.5px;background:#e9eaed;"></div>
<div class="b" style="left:0px;top:222.5px;width:38px;height:1px;background:#d3d5d9;"></div>
<div class="b" style="left:0px;top:190px;width:2px;height:24px;background:#3f78ee;"></div>
<svg class="b" style="left:0px;top:144px;" width="40" height="240" viewBox="0 0 40 240" fill="none">
<rect x="9.600" y="10.500" width="18" height="18" rx="2.500" fill="#c9d6f5" stroke="#3a3e46" stroke-width="1.300"/>
<path d="M11.500 10.700h14.200" stroke="#3f78ee" stroke-width="1.600"/>
<path d="M13 16h11.300M13 19.700h11.300M13 23.300h11.300" stroke="#3f78ee" stroke-width="1.200"/>
<path d="M36 31v5h-5z" fill="#2b2f36"/>
<path d="M10 48.600h17.500M10 52.600h17.500" stroke="#3a3e46" stroke-width="1.300"/>
<path d="M15 54v11.500c0 1.500.7 2.200 2.200 2.200H21M15 60.300h6" stroke="#3f78ee" stroke-width="1.300"/>
<rect x="21.800" y="57.600" width="4.600" height="4.600" fill="#fff" stroke="#2f6be8" stroke-width="1.600"/>
<rect x="21.800" y="65" width="4.600" height="4.600" fill="#fff" stroke="#2f6be8" stroke-width="1.600"/>
<!-- icon3 -->
<path d="M10 90h8v8h8v7.300H10z" fill="#7fa0ea" stroke="#3a3e46" stroke-width="1.300" stroke-linejoin="round"/>
<rect x="10.600" y="98.300" width="7.400" height="6.500" fill="#c3d2f4"/>
<rect x="21.500" y="86.800" width="6.800" height="6.800" fill="#c9d6f5" stroke="#3a3e46" stroke-width="1.100"/>
<!-- icon4 -->
<rect x="14.800" y="125.500" width="13.500" height="13.500" rx="2" fill="#b4c5ee" stroke="#3a3e46" stroke-width="1.200"/>
<rect x="11.800" y="128.300" width="13.500" height="13.500" rx="2" fill="#b4c5ee" stroke="#3a3e46" stroke-width="1.200"/>
<rect x="8.800" y="131.300" width="14" height="14" rx="2" fill="#e4ebfb" stroke="#3a3e46" stroke-width="1.200"/>
<path d="M9.500 135.500h12.600M9.500 140.500h12.600M13.300 132v12.600M18.300 132v12.600" stroke="#3f78ee" stroke-width="1.100"/>
<!-- icon5 -->
<rect x="9.800" y="165.300" width="18" height="18" rx="2.300" fill="#b3c4ec" stroke="#3a3e46" stroke-width="1.400"/>
<path d="M10.500 178.500h5c2.500 0 2.700-1.500 3.400-4.500.700-3.200 1.100-4.500 3.600-4.500h4.800" stroke="#2f6be8" stroke-width="1.600"/>
<!-- icon6 -->
<path d="M8.500 212.700L13.600 203.600h10.400L29.200 212.700 24 221.800H13.600z" fill="#c5d4f5" stroke="#3a3e46" stroke-width="1.300" stroke-linejoin="round"/>
<circle cx="18.800" cy="212.800" r="3.800" stroke="#2f6be8" stroke-width="1.700" fill="#dfe7fa"/>
</svg>
<svg class="b" style="left:8px;top:692px;" width="20" height="16" viewBox="0 0 20 16" fill="none"><path d="M10.700 .8L3.300 8l7.400 7.200M18.200 .8L10.800 8l7.400 7.200" stroke="#2b3140" stroke-width="1.600"/></svg>
<div class="b" style="left:39.5px;top:144px;width:384px;height:26.5px;background:#dbdde2;"></div>
<div class="b" style="left:41.3px;top:146.3px;width:83.4px;height:25px;background:#f8f9fb;border-radius:3px 3px 0 0;"></div>
<div class="b" style="left:39.5px;top:170.5px;width:384px;height:29.5px;background:#fbfcfd;"></div>
<div class="b" style="left:423.5px;top:144px;width:1.5px;height:576px;background:#c6c9ce;"></div>
<div class="b" style="left:425px;top:144px;width:1.2px;height:576px;background:#f4f5f7;"></div>
<div class="b" style="left:38px;top:718.6px;width:387px;height:1px;background:#c6c9ce;"></div>
<div class="t" style="left:48.7px;top:150.32px;font-size:13px;line-height:14.95px;color:#2b2f36;font-weight:normal;font-family:'Liberation Sans', sans-serif;"><span id="t40" style="letter-spacing:-0.308px">Database</span></div>
<svg class="b" style="left:109px;top:152px;" width="11" height="11" viewBox="0 0 11 11" fill="none"><path d="M.8.800l9 9M9.800.8l-9 9" stroke="#2b2f36" stroke-width="1.250"/></svg>
<div class="b" style="left:43px;top:174.5px;width:21.5px;height:21.5px;background:#f2f3f5;border:1px solid #e3e5e8;border-radius:3px;"></div>
<div class="b" style="left:69.5px;top:174.5px;width:21.5px;height:21.5px;background:#f2f3f5;border:1px solid #e3e5e8;border-radius:3px;"></div>
<svg class="b" style="left:47px;top:179.2px;" width="14" height="11" viewBox="0 0 14 11" fill="none"><path d="M12.500 5.500H1.800M6.300 1L1.800 5.500l4.500 4.500" stroke="#6f737a" stroke-width="1.200"/></svg>
<svg class="b" style="left:73.5px;top:179.2px;" width="14" height="11" viewBox="0 0 14 11" fill="none"><path d="M1.500 5.500h10.700M7.700 1l4.500 4.500L7.700 10" stroke="#6f737a" stroke-width="1.200"/></svg>
<div class="b" style="left:398.5px;top:174.5px;width:22px;height:21.8px;background:#f2f3f5;border:1px solid #e3e5e8;border-radius:3px;"></div>
<svg class="b" style="left:401.8px;top:177.8px;" width="16" height="16" viewBox="0 0 16 16" fill="none"><path d="M8.00,1.40L10.25,4.10L13.72,4.70L12.50,8.00L13.72,11.30L10.25,11.90L8.00,14.60L5.75,11.90L2.28,11.30L3.50,8.00L2.28,4.70L5.75,4.10z" stroke="#3a3e46" stroke-width="1.200" stroke-linejoin="round"/><circle cx="8" cy="8" r="2.500" stroke="#3a3e46" stroke-width="1.100"/></svg>
<svg class="b" style="left:414.5px;top:190.5px;" width="5" height="5" viewBox="0 0 5 5" fill="none"><path d="M4.800 0.200v4.600H0.200z" fill="#2b2f36"/></svg>
<div class="b" style="left:39.5px;top:200px;width:384px;height:24.2px;background:#e1e3e7;border-top:1px solid #cfd2d6;"></div>
<div class="b" style="left:40px;top:201px;width:22.5px;height:22.5px;border:1px dotted #6f737a;"></div>
<div class="b" style="left:196.0px;top:201px;width:1.2px;height:23px;background:#c9ccd1;"></div>
<div class="b" style="left:252.5px;top:201px;width:1.2px;height:23px;background:#c9ccd1;"></div>
<div class="b" style="left:302.8px;top:201px;width:1.2px;height:23px;background:#c9ccd1;"></div>
<div class="b" style="left:363.8px;top:201px;width:1.2px;height:23px;background:#c9ccd1;"></div>
<svg class="b" style="left:44px;top:204px;" width="14" height="18" viewBox="0 0 14 18" fill="none"><circle cx="6.600" cy="7" r="4.600" fill="#f4ea3a" stroke="#c8b820" stroke-width="1"/><circle cx="6.600" cy="13.400" r="1.600" fill="#f0f0f0" stroke="#6f737a" stroke-width="1"/></svg>
<div class="t" style="left:67.7px;top:205.82px;font-size:13px;line-height:14.95px;color:#2b2f36;font-weight:normal;font-family:'Liberation Sans', sans-serif;"><span id="t41" style="letter-spacing:-0.394px">Name</span></div>
<svg class="b" style="left:127px;top:204px;" width="10" height="6" viewBox="0 0 10 6" fill="none"><path d="M1 5L5 1.200 9 5" stroke="#2b2f36" stroke-width="1.300"/></svg>
<div class="t" style="left:201px;top:205.82px;font-size:13px;line-height:14.95px;color:#2b2f36;font-weight:normal;font-family:'Liberation Sans', sans-serif;"><span id="t42" style="letter-spacing:0.250px">Number</span></div>
<div class="t" style="left:257.6px;top:205.82px;font-size:13px;line-height:14.95px;color:#2b2f36;font-weight:normal;font-family:'Liberation Sans', sans-serif;"><span id="t43" style="letter-spacing:0.490px">Visible</span></div>
<div class="t" style="left:307.4px;top:205.82px;font-size:13px;line-height:14.95px;color:#2b2f36;font-weight:normal;font-family:'Liberation Sans', sans-serif;"><span id="t44" style="letter-spacing:0.258px">Selected</span></div>
<svg class="b" style="left:407px;top:207px;" width="11" height="11" viewBox="0 0 11 11" fill="none"><path d="M.5 1.500h4.300M6.300 1.500h4M.5 5.300h4.300M6.300 5.300h4M.5 9.100h4.300M6.300 9.100h4" stroke="#2b2f36" stroke-width="1.600"/></svg>
<svg class="b" style="left:417px;top:218.5px;" width="5" height="5" viewBox="0 0 5 5" fill="none"><path d="M4.800 0.200v4.600H0.200z" fill="#2b2f36"/></svg>
<div class="b" style="left:39.5px;top:224.2px;width:325.5px;height:23.400000000000006px;background:#c8c9cc;"></div>
<div class="b" style="left:39.5px;top:247.6px;width:325.5px;height:23.799999999999983px;background:#f8f9fb;"></div>
<div class="b" style="left:39.5px;top:271.4px;width:325.5px;height:23.400000000000034px;background:#c8c9cc;"></div>
<div class="b" style="left:39.5px;top:294.8px;width:325.5px;height:23.5px;background:#f8f9fb;"></div>
<div class="b" style="left:39.5px;top:318.3px;width:325.5px;height:23.69999999999999px;background:#e4e5e7;"></div>
<div class="b" style="left:44.4px;top:229.5px;width:13.4px;height:13.2px;background:#dfe8fc;border:1.300px solid #4a80ee;border-radius:3px;"></div>
<svg class="b" style="left:44.4px;top:229.5px;" width="13.4" height="13.2" viewBox="0 0 13.4 13.2" fill="none"><path d="M3.300 6.600l2.700 2.700 4.500-5.500" stroke="#2f6be8" stroke-width="1.600"/></svg>
<div class="b" style="left:44.4px;top:253.2px;width:13.4px;height:13.2px;background:#dfe8fc;border:1.300px solid #4a80ee;border-radius:3px;"></div>
<svg class="b" style="left:44.4px;top:253.2px;" width="13.4" height="13.2" viewBox="0 0 13.4 13.2" fill="none"><path d="M3.300 6.600l2.700 2.700 4.500-5.500" stroke="#2f6be8" stroke-width="1.600"/></svg>
<div class="b" style="left:44.4px;top:277px;width:13.4px;height:12.6px;background:#ffffff;border:1.100px solid #b9bcc2;border-radius:3px;"></div>
<div class="b" style="left:44.4px;top:324.2px;width:13.4px;height:12.6px;background:#ffffff;border:1.100px solid #b9bcc2;border-radius:3px;"></div>
<svg class="b" style="left:66.5px;top:233.7px;" width="11" height="7" viewBox="0 0 11 7" fill="none"><path d="M1 1l4.400 4.500L9.800 1" stroke="#2b2f36" stroke-width="1.250"/></svg>
<svg class="b" style="left:66.5px;top:280.9px;" width="11" height="7" viewBox="0 0 11 7" fill="none"><path d="M1 1l4.400 4.500L9.800 1" stroke="#2b2f36" stroke-width="1.250"/></svg>
<div class="t" style="left:83px;top:229.52px;font-size:13px;line-height:14.95px;color:#1d2430;font-weight:bold;font-family:'Liberation Sans', sans-serif;"><span id="t45" style="letter-spacing:0.757px">Geometry</span></div>
<div class="t" style="left:82.8px;top:276.42px;font-size:13px;line-height:14.95px;color:#1d2430;font-weight:bold;font-family:'Liberation Sans', sans-serif;"><span id="t46" style="letter-spacing:0.564px">ANSA Auxiliaries</span></div>
<div class="t" style="left:97.5px;top:253.42px;font-size:13px;line-height:14.95px;color:#2b2f36;font-weight:normal;font-family:'Liberation Sans', sans-serif;"><span id="t47" style="letter-spacing:-0.927px">SKETCH</span></div>
<div class="t" style="left:97.5px;top:300.72px;font-size:13px;line-height:14.95px;color:#2b2f36;font-weight:normal;font-family:'Liberation Sans', sans-serif;"><span id="t48" style="letter-spacing:-0.625px">ANSAPART</span></div>
<div class="t" style="left:97.5px;top:323.92px;font-size:13px;line-height:14.95px;color:#2b2f36;font-weight:normal;font-family:'Liberation Sans', sans-serif;"><span id="t49" style="letter-spacing:-0.982px">WPLANE</span></div>
<div class="t" style="left:-148px;width:400px;text-align:right;top:253.42px;font-size:13px;line-height:14.95px;color:#2b2f36;font-weight:normal;font-family:'Liberation Sans', sans-serif;">1</div>
<div class="t" style="left:-98px;width:400px;text-align:right;top:253.42px;font-size:13px;line-height:14.95px;color:#2b2f36;font-weight:normal;font-family:'Liberation Sans', sans-serif;">1</div>
<div class="t" style="left:-148px;width:400px;text-align:right;top:300.72px;font-size:13px;line-height:14.95px;color:#2b2f36;font-weight:normal;font-family:'Liberation Sans', sans-serif;">1</div>
<div class="t" style="left:-148px;width:400px;text-align:right;top:323.92px;font-size:13px;line-height:14.95px;color:#2b2f36;font-weight:normal;font-family:'Liberation Sans', sans-serif;">3</div>
<div class="t" style="left:-98px;width:400px;text-align:right;top:323.92px;font-size:13px;line-height:14.95px;color:#2b2f36;font-weight:normal;font-family:'Liberation Sans', sans-serif;">0</div>
<div class="b" style="left:426.2px;top:144px;width:854px;height:575.5px;background:linear-gradient(#04131f,#34475a);overflow:hidden">
<div class="b" style="left:68.60px;top:0;width:2px;height:575.5px;background:rgba(255,255,255,.135)"></div><div class="b" style="left:187.90px;top:0;width:2px;height:575.5px;background:rgba(255,255,255,.135)"></div><div class="b" style="left:307.20px;top:0;width:2px;height:575.5px;background:rgba(255,255,255,.135)"></div><div class="b" style="left:545.80px;top:0;width:2px;height:575.5px;background:rgba(255,255,255,.135)"></div><div class="b" style="left:665.10px;top:0;width:2px;height:575.5px;background:rgba(255,255,255,.135)"></div><div class="b" style="left:784.40px;top:0;width:2px;height:575.5px;background:rgba(255,255,255,.135)"></div><div class="b" style="left:0;top:48.50px;width:854px;height:2px;background:rgba(255,255,255,.135)"></div><div class="b" style="left:0;top:167.80px;width:854px;height:2px;background:rgba(255,255,255,.135)"></div><div class="b" style="left:0;top:406.40px;width:854px;height:2px;background:rgba(255,255,255,.135)"></div><div class="b" style="left:0;top:525.70px;width:854px;height:2px;background:rgba(255,255,255,.135)"></div><div class="b" style="left:426.50px;top:0;width:2.200px;height:575.5px;background:#1f5c36"></div><div class="b" style="left:0;top:286.80px;width:854px;height:2.200px;background:#5a1f2b"></div><div class="b" style="left:423.70px;top:284.10px;width:7.400px;height:7.400px;border-radius:50%;background:#cfd0d1"></div><div class="b" style="left:6.800000000000011px;top:520px;width:1.300px;height:1.500px;background:#c9ccd0"></div><div class="b" style="left:7.800000000000011px;top:8px;width:212px;height:30px;border-radius:2px;background:#141c2b"></div>
</div>
<div class="t" style="left:437px;top:159.56px;font-size:13.5px;line-height:15.52px;color:#f2f3f5;font-weight:normal;font-family:'Liberation Sans', sans-serif;"><span id="t55" style="letter-spacing:-0.024px">0: Untitled,  Current Part: Untitled</span></div>
<div class="t" style="left:854.4px;top:176.94px;font-size:13.5px;line-height:15.52px;color:#c9ccd0;font-weight:normal;font-family:'Liberation Mono', monospace;">100</div>
<div class="t" style="left:854.4px;top:296.14px;font-size:13.5px;line-height:15.52px;color:#c9ccd0;font-weight:normal;font-family:'Liberation Mono', monospace;">50</div>
<div class="t" style="left:974.4px;top:415.94px;font-size:13.5px;line-height:15.52px;color:#c9ccd0;font-weight:normal;font-family:'Liberation Mono', monospace;">50</div>
<div class="t" style="left:1093.6px;top:415.94px;font-size:13.5px;line-height:15.52px;color:#c9ccd0;font-weight:normal;font-family:'Liberation Mono', monospace;">100</div>
<div class="t" style="left:1212.9px;top:415.94px;font-size:13.5px;line-height:15.52px;color:#c9ccd0;font-weight:normal;font-family:'Liberation Mono', monospace;">150</div>
<svg class="b" style="left:1180px;top:150px;" width="100" height="100" viewBox="0 0 100 100" fill="none">
<line x1="14" y1="81" x2="14" y2="30" stroke="#00e000" stroke-width="2"/>
<polygon points="14,18 10,31 18,31" fill="#00e000"/>
<line x1="18" y1="81" x2="64" y2="81" stroke="#d00000" stroke-width="2"/>
<polygon points="76,81 63,77 63,85" fill="#d00000"/>
<rect x="10" y="77" width="8" height="8" fill="#0b5a60"/>
</svg>
<div class="t" style="left:994px;width:400px;text-align:center;top:152.02px;font-size:13px;line-height:14.95px;color:#00e000;font-weight:normal;font-family:'Liberation Sans', sans-serif;">Y</div>
<div class="t" style="left:1065px;width:400px;text-align:center;top:224.02px;font-size:13px;line-height:14.95px;color:#e00000;font-weight:normal;font-family:'Liberation Sans', sans-serif;">X</div>
<div class="t" style="left:994px;width:400px;text-align:center;top:224.94px;font-size:12px;line-height:13.8px;color:#19b3b3;font-weight:normal;font-family:'Liberation Sans', sans-serif;">Z</div>
<div class="b" style="left:0px;top:719.5px;width:1280px;height:1.1px;background:#fbfcfd;"></div>
<div class="b" style="left:0px;top:720.6px;width:1280px;height:1.1px;background:#bfc3c9;"></div>
<div class="b" style="left:0px;top:721.7px;width:1280px;height:0.8px;background:#eceef1;"></div>
<div class="b" style="left:0px;top:793.5px;width:1280px;height:12.5px;background:#e8e9ec;"></div>
<div class="b" style="left:553px;top:797px;width:544px;height:10px;background:#f3f4f6;border-radius:4px 4px 0 0;"></div>
<svg class="b" style="left:558px;top:796px;" width="40" height="10" viewBox="0 0 40 10" fill="none"><circle cx="2.600" cy="3.500" r="1.200" fill="#1d2026"/><circle cx="2.600" cy="8.700" r="1.200" fill="#1d2026"/><path d="M19.500 8.500v-3h2.500M29 8.500v-3h-2.500" stroke="#1d2026" stroke-width="1.300"/></svg>
<svg class="b" style="left:9px;top:729.25px;" width="5" height="19" viewBox="0 0 5 19" fill="none"><path d="M1 0v19M3.800 0v19" stroke="#92969d" stroke-width="1.100" stroke-dasharray="1.100 1.200"/></svg>
<svg class="b" style="left:22px;top:727px;" width="20" height="24" viewBox="0 0 20 24" fill="none"><path d="M2.300 2.500v19l4.600-3.600 1 2.400 3.200-1.300-.9-2.500 6.400-.3z" fill="#dcdee2" stroke="#30343c" stroke-width="1.400" stroke-linejoin="round"/></svg>
<svg class="b" style="left:49.05px;top:735.9px;" width="9.7" height="6" viewBox="0 0 9.7 6" fill="none"><path d="M1 1l3.85 4 3.85 -4" stroke="#30343c" stroke-width="1.4"/></svg>
<svg class="b" style="left:182px;top:729.25px;" width="5" height="19" viewBox="0 0 5 19" fill="none"><path d="M1 0v19M3.800 0v19" stroke="#92969d" stroke-width="1.100" stroke-dasharray="1.100 1.200"/></svg>
<div class="b" style="left:190.3px;top:724.5px;width:42.3px;height:28.8px;background:#f0f1f3;border:1px solid #e4e6e9;border-radius:3.500px;"></div>
<div class="b" style="left:219.8px;top:725px;width:1px;height:27.8px;background:#e1e3e6;"></div>
<div class="t" style="left:194.8px;top:734.10px;font-size:12px;line-height:13.8px;color:#74777e;font-weight:bold;font-family:'Liberation Mono', monospace;"><span id="t64" style="letter-spacing:-0.659px">ENT</span></div>
<svg class="b" style="left:221.45000000000002px;top:736.0px;" width="9.7" height="6" viewBox="0 0 9.7 6" fill="none"><path d="M1 1l3.85 4 3.85 -4" stroke="#b4b7bc" stroke-width="1.4"/></svg>
<div class="t" style="left:239.8px;top:734.10px;font-size:12px;line-height:13.8px;color:#74777e;font-weight:bold;font-family:'Liberation Mono', monospace;"><span id="t65" style="letter-spacing:-0.659px">PID</span></div>
<svg class="b" style="left:266.95px;top:736.0px;" width="9.7" height="6" viewBox="0 0 9.7 6" fill="none"><path d="M1 1l3.85 4 3.85 -4" stroke="#b4b7bc" stroke-width="1.4"/></svg>
<div class="t" style="left:284.8px;top:728.37px;font-size:8.5px;line-height:9.77px;color:#7b7e85;font-weight:bold;font-family:'Liberation Sans', sans-serif;"><span id="t66" style="letter-spacing:0.531px">40</span></div>
<svg class="b" style="left:284px;top:735px;" width="23" height="14" viewBox="0 0 23 14" fill="none"><path d="M8 11.500l9.500-9.800 2.300 9.800z" fill="#e6e7ea"/><path d="M1 12h20.500" stroke="#74777e" stroke-width="1.500"/><path d="M8 11.500l9.500-9.800" stroke="#74777e" stroke-width="1.400"/><path d="M14 5.300c2.500 1.700 3.600 3.800 3.800 6.500" stroke="#85888e" stroke-width="1.100"/></svg>
<svg class="b" style="left:311.95px;top:736.0px;" width="9.7" height="6" viewBox="0 0 9.7 6" fill="none"><path d="M1 1l3.85 4 3.85 -4" stroke="#c2c4c9" stroke-width="1.4"/></svg>
<svg class="b" style="left:329px;top:727px;" width="24" height="24" viewBox="0 0 24 24" fill="none"><circle cx="11.600" cy="11.750" r="8.300" stroke="#a4a7ad" stroke-width="1.200" stroke-dasharray="3.600 2.400" stroke-dashoffset="1.800"/><path d="M11.600 .8v4.400M9.400 3h4.400M11.600 18.300v4.400M9.400 20.500h4.400M.6 11.750h4.400M2.800 9.550v4.400M18.200 11.750h4.400M20.400 9.550v4.400" stroke="#a4a7ad" stroke-width="1.100"/></svg>
<svg class="b" style="left:357.45px;top:736.0px;" width="9.7" height="6" viewBox="0 0 9.7 6" fill="none"><path d="M1 1l3.85 4 3.85 -4" stroke="#c2c4c9" stroke-width="1.4"/></svg>
<div class="b" style="left:373px;top:724px;width:1.5px;height:29.5px;background:#dadce0;"></div>
<svg class="b" style="left:382px;top:729px;" width="22" height="18" viewBox="0 0 22 18" fill="none"><path d="M1.500 6v10.500H15.500" stroke="#d0d2d6" stroke-width="2.200"/><rect x="5.800" y="1.600" width="14.800" height="10.800" fill="#e9eaec" stroke="#a4a7ad" stroke-width="1.300" stroke-dasharray="2.600 1.700"/></svg>
<svg class="b" style="left:409.04999999999995px;top:736.0px;" width="9.7" height="6" viewBox="0 0 9.7 6" fill="none"><path d="M1 1l3.85 4 3.85 -4" stroke="#c2c4c9" stroke-width="1.4"/></svg>
<svg class="b" style="left:427px;top:728px;" width="22" height="21" viewBox="0 0 22 21" fill="none"><path d="M6.500 1.800L1.500 10.200l6.300 9 11.300-6L19.800 5l-8 2z" fill="#eff0f2" stroke="#8d9096" stroke-width="1.100" stroke-dasharray="2.300 1.500" stroke-linejoin="round"/></svg>
<svg class="b" style="left:454.5px;top:732.25px;" width="9" height="13" viewBox="0 0 9 13" fill="none"><path d="M1.500 1.200l5.200 5.300-5.200 5.300" stroke="#30343c" stroke-width="1.500"/></svg>
<svg class="b" style="left:481px;top:729.25px;" width="5" height="19" viewBox="0 0 5 19" fill="none"><path d="M1 0v19M3.800 0v19" stroke="#92969d" stroke-width="1.100" stroke-dasharray="1.100 1.200"/></svg>
<div class="b" style="left:493.3px;top:728.55px;width:20.4px;height:20.4px;background:#e3e4e7;border-radius:50%;"></div>
<div class="b" style="left:525.4px;top:728.55px;width:20.4px;height:20.4px;background:#e3e4e7;border-radius:50%;"></div>
<div class="b" style="left:557.5px;top:728.55px;width:20.4px;height:20.4px;background:#e3e4e7;border-radius:50%;"></div>
<div class="b" style="left:589.5px;top:728.55px;width:20.4px;height:20.4px;background:#e3e4e7;border-radius:50%;"></div>
<svg class="b" style="left:493px;top:728px;" width="118" height="22" viewBox="0 0 118 22" fill="none"><path d="M6.300 15l8.200-8.200" stroke="#30343c" stroke-width="1.600"/><path d="M36.400 10.750h12.400M42.600 4.500v12.500" stroke="#30343c" stroke-width="1.700"/><path d="M68.500 10.750h12.500" stroke="#30343c" stroke-width="1.700"/><path d="M102 4.800v8" stroke="#30343c" stroke-width="1.700"/><rect x="101.100" y="15" width="1.800" height="1.800" fill="#30343c"/><path d="M105.300 10.750h8.700" stroke="#30343c" stroke-width="1.700"/></svg>
<svg class="b" style="left:622.3px;top:728.8px;" width="20" height="20" viewBox="0 0 20 20" fill="none"><rect x="0.7" y="0.7" width="7.800" height="7.800" rx="1.200" fill="#c8cacd" stroke="#30343c" stroke-width="1.300"/><rect x="0.7" y="11.2" width="7.800" height="7.800" rx="1.200" fill="#c8cacd" stroke="#30343c" stroke-width="1.300"/><rect x="11.2" y="0.7" width="7.800" height="7.800" rx="1.200" fill="#c8cacd" stroke="#30343c" stroke-width="1.300"/><rect x="11.2" y="11.2" width="7.800" height="7.800" rx="1.200" fill="#c8cacd" stroke="#30343c" stroke-width="1.300"/></svg>
<svg class="b" style="left:654.3px;top:728.8px;" width="20" height="20" viewBox="0 0 20 20" fill="none"><rect x=".7" y=".7" width="7.800" height="7.800" rx="1.200" fill="#c8cacd" stroke="#30343c" stroke-width="1.300"/><rect x="11.200" y=".7" width="7.800" height="7.800" rx="1.200" fill="#f4f4f6" stroke="#d9dadd" stroke-width="1"/><path d="M11.200 7V1.900c0-.8.400-1.200 1.200-1.200h5.500z" fill="#c8cacd"/><path d="M11.200 7V1.900c0-.8.400-1.200 1.200-1.200h5.500" stroke="#30343c" stroke-width="1.300"/><rect x=".7" y="11.200" width="7.800" height="7.800" rx="1.200" fill="#f4f4f6" stroke="#d9dadd" stroke-width="1"/><path d="M.7 17.500v-5.100c0-.8.400-1.200 1.200-1.200h5.500z" fill="#c8cacd"/><path d="M.7 17.500v-5.100c0-.8.400-1.200 1.200-1.200h5.500" stroke="#30343c" stroke-width="1.300"/><rect x="11.200" y="11.200" width="7.800" height="7.800" rx="1.200" fill="#fafafb" stroke="#dfe0e3" stroke-width="1"/></svg>
<svg class="b" style="left:687px;top:728px;" width="19" height="21" viewBox="0 0 19 21" fill="none"><rect x="1" y="10.300" width="16.600" height="9.200" rx="1.800" fill="#dcdee2" stroke="#30343c" stroke-width="1.400"/><path d="M4.600 10V6.300c0-3 1.800-4.800 4.700-4.800s4.700 1.800 4.700 4.800V10" stroke="#30343c" stroke-width="1.500"/><circle cx="9.300" cy="14" r="1.300" stroke="#30343c" stroke-width="1"/><path d="M9.300 15.300v2.200" stroke="#30343c" stroke-width="1"/></svg>
<svg class="b" style="left:713.05px;top:736.0px;" width="9.7" height="6" viewBox="0 0 9.7 6" fill="none"><path d="M1 1l3.85 4 3.85 -4" stroke="#30343c" stroke-width="1.4"/></svg>
<svg class="b" style="left:731px;top:728.3px;" width="26" height="26" viewBox="0 0 26 26" fill="none"><rect x="7.9" y="0.30000000000000027" width="4.800" height="4.800" rx=".7" fill="#f4f5f7" stroke="#30343c" stroke-width="1.2"/><rect x="0.20000000000000062" y="8.0" width="4.800" height="4.800" rx=".7" fill="#f4f5f7" stroke="#30343c" stroke-width="1.2"/><rect x="7.9" y="8.0" width="4.800" height="4.800" rx=".7" fill="#f4f5f7" stroke="#30343c" stroke-width="1.7"/><rect x="15.6" y="8.0" width="4.800" height="4.800" rx=".7" fill="#f4f5f7" stroke="#30343c" stroke-width="1.2"/><rect x="7.9" y="15.700000000000001" width="4.800" height="4.800" rx=".7" fill="#f4f5f7" stroke="#30343c" stroke-width="1.2"/><path d="M24 19v5h-5z" fill="#30343c"/></svg>
<svg class="b" style="left:762px;top:727px;" width="24" height="24" viewBox="0 0 24 24" fill="none"><circle cx="11.500" cy="11.750" r="10.200" stroke="#b9bbc0" stroke-width="1" fill="#eeeff1"/><circle cx="11.500" cy="11.750" r="7.300" stroke="#55585f" stroke-width="1.200" fill="#e6e7ea"/><rect x="8.200" y="8.450" width="6.600" height="6.600" rx="1.500" fill="#8d9096" stroke="#1d2026" stroke-width="1.400"/></svg>
<svg class="b" style="left:790.5px;top:732.25px;" width="9" height="13" viewBox="0 0 9 13" fill="none"><path d="M1.500 1.200l5.200 5.300-5.200 5.300" stroke="#30343c" stroke-width="1.500"/></svg>
<svg class="b" style="left:817.5px;top:729.25px;" width="5" height="19" viewBox="0 0 5 19" fill="none"><path d="M1 0v19M3.800 0v19" stroke="#92969d" stroke-width="1.100" stroke-dasharray="1.100 1.200"/></svg>
<div class="b" style="left:835.6px;top:728.3px;width:9.5px;height:9.2px;background:#f0e9bd;border:1.300px solid #b99a18;border-radius:2px;"></div>
<div class="t" style="left:830.6px;top:740.13px;font-size:10.5px;line-height:12.07px;color:#2b2f36;font-weight:bold;font-family:'Liberation Sans', sans-serif;"><span id="t67" style="letter-spacing:-0.750px">ENT</span></div>
<svg class="b" style="left:849.3px;top:747.3px;" width="5" height="5" viewBox="0 0 5 5" fill="none"><path d="M4.800 0.200v4.600H0.200z" fill="#2b2f36"/></svg>
<svg class="b" style="left:862px;top:728px;" width="21" height="21" viewBox="0 0 21 21" fill="none"><path d="M2.500 1.300h16.300c.8 0 1.200.4 1.200 1.200v16c0 .8-.4 1.200-1.200 1.200H2.500c-.8 0-1.200-.4-1.200-1.200v-16c0-.8.400-1.200 1.200-1.200z" fill="#f0e9bd"/><path d="M20 4L6 19.700h12.800c.8 0 1.200-.4 1.200-1.200z" fill="#eef3fe"/><path d="M13.500 11.500h6v8h-9z" fill="#dce7fd"/><path d="M14.500 13v6.500M17.300 11.500v8" stroke="#3f78ee" stroke-width="1.200"/><path d="M2.500 1.300h16.300c.8 0 1.200.4 1.200 1.200v16c0 .8-.4 1.200-1.200 1.200H2.500c-.8 0-1.200-.4-1.200-1.200v-16c0-.8.400-1.200 1.200-1.200z" stroke="#30343c" stroke-width="1.300"/><path d="M8 1.500v18M8 11.300h7M20 3.500L6.500 19.700" stroke="#30343c" stroke-width="1.200"/></svg>
<svg class="b" style="left:889.25px;top:736.0px;" width="9.7" height="6" viewBox="0 0 9.7 6" fill="none"><path d="M1 1l3.85 4 3.85 -4" stroke="#30343c" stroke-width="1.4"/></svg>
<div class="b" style="left:902.8px;top:723.8px;width:30px;height:29.7px;background:#e8effd;border:1.400px solid #6097f1;border-radius:4.500px;"></div>
<svg class="b" style="left:906px;top:726px;" width="24" height="25" viewBox="0 0 24 25" fill="none"><path d="M11.800 1.500L22 6.200 11.800 11 1.600 6.200z" fill="#b6cff6"/><path d="M1.600 6.200L11.800 11v12.700L1.600 18.500z" fill="#88a4d8"/><path d="M22 6.200L11.800 11v12.700L22 18.500z" fill="#9dbaf1"/><path d="M11.800 1.500L22 6.200v12.300L11.800 23.700 1.600 18.500V6.200zM1.600 6.200L11.800 11 22 6.200M11.800 11v12.700" stroke="#30343c" stroke-width="1.200" stroke-linejoin="round"/></svg>
<svg class="b" style="left:938px;top:726px;" width="24" height="25" viewBox="0 0 24 25" fill="none"><defs><linearGradient id="rgL" gradientUnits="userSpaceOnUse" x1="1.600" y1="18.500" x2="11.800" y2="10.500"><stop offset="0" stop-color="#2858dc"/><stop offset=".36" stop-color="#2a6ae6"/><stop offset=".52" stop-color="#28b868"/><stop offset=".68" stop-color="#eee024"/><stop offset=".84" stop-color="#f08a18"/><stop offset="1" stop-color="#d41c10"/></linearGradient><linearGradient id="rgR" gradientUnits="userSpaceOnUse" x1="22" y1="18.500" x2="11.800" y2="10.500"><stop offset="0" stop-color="#2858dc"/><stop offset=".36" stop-color="#2a6ae6"/><stop offset=".52" stop-color="#28b868"/><stop offset=".68" stop-color="#eee024"/><stop offset=".84" stop-color="#f08a18"/><stop offset="1" stop-color="#d41c10"/></linearGradient><linearGradient id="rgT" gradientUnits="userSpaceOnUse" x1="11.800" y1="0" x2="11.800" y2="11"><stop offset="0" stop-color="#2858dc"/><stop offset=".36" stop-color="#2a6ae6"/><stop offset=".52" stop-color="#28b868"/><stop offset=".68" stop-color="#eee024"/><stop offset=".84" stop-color="#f08a18"/><stop offset="1" stop-color="#d41c10"/></linearGradient></defs>
<path d="M11.800 1.500L22 6.200 11.800 11 1.600 6.200z" fill="url(#rgT)"/><path d="M1.600 6.200L11.800 11v12.700L1.600 18.500z" fill="url(#rgL)"/><path d="M22 6.200L11.800 11v12.700L22 18.500z" fill="url(#rgR)"/>
<path d="M11.800 1.500L22 6.200v12.300L11.800 23.700 1.600 18.500V6.200zM1.600 6.200L11.800 11 22 6.200M11.800 11v12.700" stroke="#1d2430" stroke-width="1.100" stroke-linejoin="round"/></svg>
<svg class="b" style="left:966.85px;top:736.0px;" width="9.7" height="6" viewBox="0 0 9.7 6" fill="none"><path d="M1 1l3.85 4 3.85 -4" stroke="#30343c" stroke-width="1.4"/></svg>
<div class="b" style="left:980px;top:723.8px;width:30px;height:29.7px;background:#e8effd;border:1.400px solid #6097f1;border-radius:4.500px;"></div>
<svg class="b" style="left:983.5px;top:726px;" width="24" height="25" viewBox="0 0 24 25" fill="none"><path d="M11.800 1.500L22 6.200v12.300L11.800 23.700 1.600 18.500V6.200z" fill="#eef0f4"/><path d="M11.800 1.500L22 6.200v12.300L11.800 23.700 1.600 18.500V6.200zM1.600 6.200L11.800 11 22 6.200M11.800 11v12.700M6.700 3.850L16.900 8.600v12.600M16.900 3.850L6.700 8.600v12.600M1.600 12.300l10.200 5 10.200-5" stroke="#30343c" stroke-width="1.100" stroke-linejoin="round"/></svg>
<svg class="b" style="left:1015.5px;top:726px;" width="24" height="25" viewBox="0 0 24 25" fill="none"><path d="M11.800 1.500L22 6.200v12.300L11.800 23.700 1.600 18.500V6.200zM1.600 6.200L11.800 11 22 6.200M11.800 11v12.700M11.800 1.500v12.500M1.600 18.500L11.800 14 22 18.500" stroke="#e23a3a" stroke-width="1.200" stroke-linejoin="round"/></svg>
<svg class="b" style="left:1044.15px;top:736.0px;" width="9.7" height="6" viewBox="0 0 9.7 6" fill="none"><path d="M1 1l3.85 4 3.85 -4" stroke="#30343c" stroke-width="1.4"/></svg>
<div class="b" style="left:1063px;top:729px;width:19px;height:19.2px;background:#e3e4e7;border-radius:2.500px;"></div>
<div class="t" style="left:1065.3px;top:730.49px;font-size:8.8px;line-height:10.12px;color:#55585f;font-weight:bold;font-family:'Liberation Mono', monospace;"><span id="t68" style="letter-spacing:-0.672px">545</span></div>
<div class="t" style="left:1065.3px;top:738.99px;font-size:8.8px;line-height:10.12px;color:#55585f;font-weight:bold;font-family:'Liberation Mono', monospace;"><span id="t69" style="letter-spacing:-0.672px">068</span></div>
<svg class="b" style="left:1089.15px;top:736.0px;" width="9.7" height="6" viewBox="0 0 9.7 6" fill="none"><path d="M1 1l3.85 4 3.85 -4" stroke="#30343c" stroke-width="1.4"/></svg>
<svg class="b" style="left:1105px;top:726px;" width="24" height="25" viewBox="0 0 24 25" fill="none"><path d="M12 1.800l9.600 4.700L12 11 4 7.500z" fill="#eceded"/><path d="M4 9.500l8 3.500v10.500l-8-4z" fill="#b9bbc0"/><path d="M21.600 6.500L12 11v12.500l9.600-4.800z" fill="#cfd1d5"/><path d="M12 1.800l9.600 4.700v12.200L12 23.500l-8-4V12M12 11l9.600-4.500M12 11v12.500" stroke="#6f737a" stroke-width="1.100" stroke-linejoin="round"/><path d="M3.500 1.500v10M8.800 1.500v9" stroke="#3f78ee" stroke-width="1.300"/><rect x="1.800" y="6.300" width="3.400" height="3.400" fill="#e8effd" stroke="#3f78ee" stroke-width="1.300"/><rect x="7.100" y="2.600" width="3.400" height="3.400" fill="#e8effd" stroke="#3f78ee" stroke-width="1.300"/></svg>
<svg class="b" style="left:1134.65px;top:736.0px;" width="9.7" height="6" viewBox="0 0 9.7 6" fill="none"><path d="M1 1l3.85 4 3.85 -4" stroke="#30343c" stroke-width="1.4"/></svg>
<svg class="b" style="left:1147.5px;top:732.25px;" width="9" height="13" viewBox="0 0 9 13" fill="none"><path d="M1.500 1.200l5.200 5.300-5.200 5.300" stroke="#30343c" stroke-width="1.500"/></svg>
<svg class="b" style="left:9px;top:766.3px;" width="5" height="19" viewBox="0 0 5 19" fill="none"><path d="M1 0v19M3.800 0v19" stroke="#92969d" stroke-width="1.100" stroke-dasharray="1.100 1.200"/></svg>
<div class="b" style="left:17.3px;top:761.3px;width:42.7px;height:30.300000000000068px;background:#e8effd;border:1.400px solid #6097f1;border-radius:4.500px;"></div>
<div class="b" style="left:46.599999999999994px;top:761.8px;width:1.4px;height:29.300000000000068px;background:#6097f1;"></div>
<div class="b" style="left:22.5px;top:767px;width:19px;height:18.8px;background:#f0e9bf;border:1.400px solid #d7b41f;border-radius:2.500px;"></div>
<svg class="b" style="left:48.85px;top:773.7px;" width="9.7" height="6" viewBox="0 0 9.7 6" fill="none"><path d="M1 1l3.85 4 3.85 -4" stroke="#30343c" stroke-width="1.4"/></svg>
<div class="b" style="left:62.3px;top:761.3px;width:30.0px;height:30.300000000000068px;background:#e8effd;border:1.400px solid #6097f1;border-radius:4.500px;"></div>
<svg class="b" style="left:67px;top:766px;" width="21" height="21" viewBox="0 0 21 21" fill="none"><path d="M4.800 1.800h12.800c1 0 1.500.5 1.500 1.500v12.200l-3.600 3.800H2.700c-1 0-1.500-.5-1.500-1.500V5.600z" fill="#f0e9bf" stroke="#d7b41f" stroke-width="1.400" stroke-linejoin="round"/><path d="M4.800 1.800v13.700h14.300M4.800 15.500l-3.600 3.300" stroke="#d7b41f" stroke-width="1.300"/></svg>
<div class="b" style="left:94.4px;top:761.3px;width:43.099999999999994px;height:30.300000000000068px;background:#e8effd;border:1.400px solid #6097f1;border-radius:4.500px;"></div>
<div class="b" style="left:123.7px;top:761.8px;width:1.4px;height:29.300000000000068px;background:#6097f1;"></div>
<div class="b" style="left:100.5px;top:767.8px;width:18.3px;height:17.8px;background:#f0e9bf;border:1.300px solid #d7b41f;"></div>
<div class="b" style="left:98.3px;top:765.5999999999999px;width:4.4px;height:4.4px;background:#ffffff;border:1.100px solid #4a4030;border-radius:50%;"></div>
<div class="b" style="left:116.6px;top:765.5999999999999px;width:4.4px;height:4.4px;background:#ffffff;border:1.100px solid #4a4030;border-radius:50%;"></div>
<div class="b" style="left:98.3px;top:783.4px;width:4.4px;height:4.4px;background:#ffffff;border:1.100px solid #4a4030;border-radius:50%;"></div>
<div class="b" style="left:116.6px;top:783.4px;width:4.4px;height:4.4px;background:#ffffff;border:1.100px solid #4a4030;border-radius:50%;"></div>
<svg class="b" style="left:126.15px;top:773.7px;" width="9.7" height="6" viewBox="0 0 9.7 6" fill="none"><path d="M1 1l3.85 4 3.85 -4" stroke="#30343c" stroke-width="1.4"/></svg>
<div class="b" style="left:139.8px;top:761.3px;width:42.69999999999999px;height:30.300000000000068px;background:#e8effd;border:1.400px solid #6097f1;border-radius:4.500px;"></div>
<div class="b" style="left:169.9px;top:761.8px;width:1.4px;height:29.300000000000068px;background:#6097f1;"></div>
<div class="b" style="left:144.4px;top:768.5px;width:20.4px;height:16.2px;background:#f0e9bf;border:1.400px solid #d7b41f;border-radius:2px;"></div>
<div class="b" style="left:153.4px;top:768.5px;width:1.6px;height:16.2px;background:#d7b41f;"></div>
<svg class="b" style="left:171.65px;top:773.7px;" width="9.7" height="6" viewBox="0 0 9.7 6" fill="none"><path d="M1 1l3.85 4 3.85 -4" stroke="#30343c" stroke-width="1.4"/></svg>
<div class="b" style="left:185.3px;top:761.3px;width:42.5px;height:30.300000000000068px;background:#e8effd;border:1.400px solid #6097f1;border-radius:4.500px;"></div>
<div class="b" style="left:214.9px;top:761.8px;width:1.4px;height:29.300000000000068px;background:#6097f1;"></div>
<svg class="b" style="left:188px;top:766px;" width="26" height="22" viewBox="0 0 26 22" fill="none"><path d="M15 4C9 4.500 5.500 7.500 5.500 11S9 17.500 15 18c3-2 4.500-4.500 4.500-7S18 6 15 4z" fill="#f0ecc8"/><path d="M14.500 3.500C8.500 4.300 5.200 7.500 5.200 11s3.300 6.700 9.300 7.500" stroke="#d63ad0" stroke-width="1.200"/><path d="M17.400 1.500v6M14.400 4.500h6M17.400 14.500v6M14.400 17.500h6M4.200 8v6M1.200 11h6" stroke="#d63ad0" stroke-width="1.400"/></svg>
<svg class="b" style="left:216.85px;top:773.7px;" width="9.7" height="6" viewBox="0 0 9.7 6" fill="none"><path d="M1 1l3.85 4 3.85 -4" stroke="#30343c" stroke-width="1.4"/></svg>
<div class="b" style="left:230.6px;top:761.3px;width:42.900000000000006px;height:30.300000000000068px;background:#e8effd;border:1.400px solid #6097f1;border-radius:4.500px;"></div>
<div class="b" style="left:259.6px;top:761.8px;width:1.4px;height:29.300000000000068px;background:#6097f1;"></div>
<svg class="b" style="left:235px;top:766px;" width="24" height="22" viewBox="0 0 24 22" fill="none"><ellipse cx="11.500" cy="10.500" rx="10.500" ry="9.500" fill="#eef0dc"/><rect x="3.500" y="2.500" width="6" height="6" rx=".8" stroke="#18a5a0" stroke-width="1.300"/><rect x="7.200" y="13.500" width="6" height="6" rx=".8" stroke="#18a5a0" stroke-width="1.300"/><circle cx="17.500" cy="8.800" r="2.800" stroke="#18a5a0" stroke-width="1.200"/></svg>
<svg class="b" style="left:261.95px;top:773.7px;" width="9.7" height="6" viewBox="0 0 9.7 6" fill="none"><path d="M1 1l3.85 4 3.85 -4" stroke="#30343c" stroke-width="1.4"/></svg>
<svg class="b" style="left:296px;top:766.3px;" width="5" height="19" viewBox="0 0 5 19" fill="none"><path d="M1 0v19M3.800 0v19" stroke="#92969d" stroke-width="1.100" stroke-dasharray="1.100 1.200"/></svg>
<div class="b" style="left:304px;top:761.3px;width:42.89999999999998px;height:30.300000000000068px;background:#e8effd;border:1.400px solid #6097f1;border-radius:4.500px;"></div>
<div class="b" style="left:333.7px;top:761.8px;width:1.4px;height:29.300000000000068px;background:#6097f1;"></div>
<svg class="b" style="left:309px;top:766.5px;" width="20" height="20" viewBox="0 0 20 20" fill="none"><rect x=".7" y=".7" width="18.300" height="18.300" rx="2" fill="#a9e8e8"/><path d="M1 4h18M1 7.300h18M1 10.600h18M1 14h18M1 17h18M4 1v18M7 1v18M13 1v18M16 1v18" stroke="#d5f5f5" stroke-width=".7"/><path d="M1 5.500h18M1 12.600h18M10 1v7M7.500 12.600L10 8l2.500 4.600M6 12.600V19M13.800 12.600V19" stroke="#16a5a5" stroke-width="1.100"/><rect x=".7" y=".7" width="18.300" height="18.300" rx="2" stroke="#1c3838" stroke-width="1.300"/></svg>
<svg class="b" style="left:335.75px;top:773.7px;" width="9.7" height="6" viewBox="0 0 9.7 6" fill="none"><path d="M1 1l3.85 4 3.85 -4" stroke="#30343c" stroke-width="1.4"/></svg>
<div class="b" style="left:349.4px;top:761.3px;width:42.900000000000034px;height:30.300000000000068px;background:#e8effd;border:1.400px solid #6097f1;border-radius:4.500px;"></div>
<div class="b" style="left:378.7px;top:761.8px;width:1.4px;height:29.300000000000068px;background:#6097f1;"></div>
<svg class="b" style="left:354px;top:766.5px;" width="21" height="20" viewBox="0 0 21 20" fill="none"><path d="M4.500 .8h13.300c1 0 1.500.5 1.500 1.500v12.500l-3.600 4H2.300c-1 0-1.500-.5-1.500-1.500V5z" fill="#a9e8e8"/><path d="M4.500 4h14.500M4.500 7.300h14.500M4.500 11h14.500M8 1v14M11.500 1v14M15 1v14" stroke="#d5f5f5" stroke-width=".7"/><path d="M4.500 5.300h14.700M4.500 10.500h14.700M12 1v6M10 10.500l2-3.500 2 3.500M8.300 10.500V15M15.600 10.500V15M2 17l3-2M6.500 18.500l2.500-3.300M11.500 18.500l2.300-3.300" stroke="#16a5a5" stroke-width="1"/><path d="M4.500 .8h13.300c1 0 1.500.5 1.500 1.500v12.500l-3.600 4H2.300c-1 0-1.500-.5-1.500-1.500V5zM4.500 .8v14.200h14.800M4.500 15L.9 18.300" stroke="#1c3838" stroke-width="1.300" stroke-linejoin="round"/></svg>
<svg class="b" style="left:381.04999999999995px;top:773.7px;" width="9.7" height="6" viewBox="0 0 9.7 6" fill="none"><path d="M1 1l3.85 4 3.85 -4" stroke="#30343c" stroke-width="1.4"/></svg>
<div class="b" style="left:394.4px;top:761.3px;width:43.10000000000002px;height:30.300000000000068px;background:#e8effd;border:1.400px solid #6097f1;border-radius:4.500px;"></div>
<div class="b" style="left:423.90000000000003px;top:761.8px;width:1.4px;height:29.300000000000068px;background:#6097f1;"></div>
<svg class="b" style="left:398px;top:765px;" width="26" height="24" viewBox="0 0 26 24" fill="none"><circle cx="11.500" cy="11.500" r="9.500" fill="#d3f1f3"/><path d="M7 16.500l9-9.500" stroke="#16a5a5" stroke-width="1.700"/><path d="M19.200 1.300v6M16.200 4.300h6M4.600 15.700v6M1.600 18.700h6" stroke="#1c3838" stroke-width="1.200"/></svg>
<svg class="b" style="left:426.15px;top:773.7px;" width="9.7" height="6" viewBox="0 0 9.7 6" fill="none"><path d="M1 1l3.85 4 3.85 -4" stroke="#30343c" stroke-width="1.4"/></svg>
<svg class="b" style="left:443px;top:765px;" width="24" height="24" viewBox="0 0 24 24" fill="none"><circle cx="11" cy="11.800" r="9.500" fill="#ddf4f1"/><path d="M6 6.500v8M2 10.500h8" stroke="#12a39a" stroke-width="2.200"/><path d="M16.500 2.300v8M12.500 6.300h8M14 13.500v8M10 17.500h8" stroke="#1c3838" stroke-width="1.200"/></svg>
<svg class="b" style="left:471.45px;top:773.7px;" width="9.7" height="6" viewBox="0 0 9.7 6" fill="none"><path d="M1 1l3.85 4 3.85 -4" stroke="#30343c" stroke-width="1.4"/></svg>
<div class="b" style="left:485px;top:761.3px;width:29.799999999999955px;height:30.300000000000068px;background:#e8effd;border:1.400px solid #6097f1;border-radius:4.500px;"></div>
<svg class="b" style="left:488px;top:766px;" width="24" height="22" viewBox="0 0 24 22" fill="none"><path d="M4 14V2M1.300 4.700L4 2l2.700 2.700" stroke="#1c3838" stroke-width="1.200"/><circle cx="4" cy="18.600" r="2.300" fill="#12a39a"/><path d="M8.500 18.600h12M17.800 15.900l2.700 2.700-2.700 2.700" stroke="#1c3838" stroke-width="1.200"/><path d="M10 5.500l2.800-3h8.500v8l-2.800 2.800H10z" fill="#bfeeee" stroke="#1c3838" stroke-width="1.200" stroke-linejoin="round"/><path d="M10 5.500h8.500v7.800M18.500 5.500l2.800-3" stroke="#1c3838" stroke-width="1.100"/></svg>
<div class="b" style="left:517.3px;top:761.3px;width:42.700000000000045px;height:30.300000000000068px;background:#e8effd;border:1.400px solid #6097f1;border-radius:4.500px;"></div>
<div class="b" style="left:546.8px;top:761.8px;width:1.4px;height:29.300000000000068px;background:#6097f1;"></div>
<svg class="b" style="left:521px;top:766px;" width="22" height="22" viewBox="0 0 22 22" fill="none"><path d="M3.500 10.500L5.300 2.300c.2-.8.700-1.100 1.500-1.100s1.300.3 1.500 1.100l1.800 8.200z" fill="#bfeeee" stroke="#16a5a5" stroke-width="1.200" stroke-linejoin="round"/><path d="M11.800 10.500l1.800-8.200c.2-.8.700-1.100 1.500-1.100s1.300.3 1.500 1.100l1.800 8.200z" fill="#bfeeee" stroke="#16a5a5" stroke-width="1.200" stroke-linejoin="round"/><path d="M4.800 4.700h4M13.100 4.700h4" stroke="#16a5a5" stroke-width="1"/><path d="M.8 13.300h20.500" stroke="#1c3838" stroke-width="1.300"/><path d="M11 14.500l3.500 5h-7z" fill="#bfeeee" stroke="#1c3838" stroke-width="1.100"/></svg>
<svg class="b" style="left:548.85px;top:773.7px;" width="9.7" height="6" viewBox="0 0 9.7 6" fill="none"><path d="M1 1l3.85 4 3.85 -4" stroke="#30343c" stroke-width="1.4"/></svg>
<svg class="b" style="left:673px;top:766.3px;" width="5" height="19" viewBox="0 0 5 19" fill="none"><path d="M1 0v19M3.800 0v19" stroke="#92969d" stroke-width="1.100" stroke-dasharray="1.100 1.200"/></svg>
<div class="b" style="left:681.3px;top:761.3px;width:43.10000000000002px;height:30.300000000000068px;background:#e8effd;border:1.400px solid #6097f1;border-radius:4.500px;"></div>
<div class="b" style="left:710.8px;top:761.8px;width:1.4px;height:29.300000000000068px;background:#6097f1;"></div>
<svg class="b" style="left:685px;top:766px;" width="22" height="21" viewBox="0 0 22 21" fill="none"><path d="M1.300 10.400L6.300 1.500h9.600l5 8.900-5 8.900H6.300z" fill="#efd3e4" stroke="#7a2a3c" stroke-width="1.200" stroke-linejoin="round"/><circle cx="11.100" cy="10.400" r="3.700" fill="#f8f0f6" stroke="#e0246a" stroke-width="1.800"/></svg>
<svg class="b" style="left:712.9499999999999px;top:773.7px;" width="9.7" height="6" viewBox="0 0 9.7 6" fill="none"><path d="M1 1l3.85 4 3.85 -4" stroke="#30343c" stroke-width="1.4"/></svg>
<div class="b" style="left:726.3px;top:761.3px;width:30.0px;height:30.300000000000068px;background:#e8effd;border:1.400px solid #6097f1;border-radius:4.500px;"></div>
<svg class="b" style="left:729px;top:766px;" width="24" height="22" viewBox="0 0 24 22" fill="none"><path d="M2.500 4.500l2.300-2.300 7 7.200c1-.3 2-.3 3 0l5-6.500 2.500 1.800-5 7.500c.8 3-.5 5.500-3 6.500-2.700 1-5.500-.3-6.300-3-.5-1.700 0-3.400 1-4.600z" fill="#f3c3d6" stroke="#7a2a3c" stroke-width="1.100" stroke-linejoin="round"/><circle cx="12" cy="14.500" r="2.600" fill="#f8dfe9" stroke="#e0246a" stroke-width="1.100"/><circle cx="12" cy="14.500" r=".9" fill="#e0246a"/></svg>
<div class="b" style="left:758.5px;top:761.3px;width:30.299999999999955px;height:30.300000000000068px;background:#e8effd;border:1.400px solid #6097f1;border-radius:4.500px;"></div>
<svg class="b" style="left:763px;top:766px;" width="21" height="21" viewBox="0 0 21 21" fill="none"><path d="M1.800 6V1.800H6M15 1.800h4.200V6M19.200 15v4.200H15M6 19.200H1.800V15" stroke="#7a2a3c" stroke-width="1.400"/><circle cx="10.500" cy="10.500" r="4" fill="#f3c3d6" stroke="#e0246a" stroke-width="1.700"/></svg>
<svg class="b" style="left:803px;top:766.3px;" width="5" height="19" viewBox="0 0 5 19" fill="none"><path d="M1 0v19M3.800 0v19" stroke="#92969d" stroke-width="1.100" stroke-dasharray="1.100 1.200"/></svg>
<svg class="b" style="left:816px;top:765px;" width="22" height="23" viewBox="0 0 22 23" fill="none"><path d="M4.500 1.500h3.200c0 8 2 12 8 12.200h3.800v6.800H4.500z" fill="#e8defa" stroke="#5b3aa0" stroke-width="1.400" stroke-linejoin="round"/><path d="M1 2.500h2.500M1 5h2.500M1 7.500h2.500M1 10h2.500M1 12.500h2.500M1 15h2.500M1 17.500h2.500M1 20h2.500" stroke="#8a5cf0" stroke-width="1.100"/><path d="M3.800 1.200v20" stroke="#8a5cf0" stroke-width="1.200"/></svg>
<svg class="b" style="left:843.15px;top:773.7px;" width="9.7" height="6" viewBox="0 0 9.7 6" fill="none"><path d="M1 1l3.85 4 3.85 -4" stroke="#30343c" stroke-width="1.4"/></svg>
<svg class="b" style="left:867px;top:766.3px;" width="5" height="19" viewBox="0 0 5 19" fill="none"><path d="M1 0v19M3.800 0v19" stroke="#92969d" stroke-width="1.100" stroke-dasharray="1.100 1.200"/></svg>
<svg class="b" style="left:877px;top:767px;" width="26" height="18" viewBox="0 0 26 18" fill="none"><path d="M1.500 16l8.500-9.500h13L14.500 16z" fill="#fbe6d8" stroke="#5a2e17" stroke-width="1.100" stroke-linejoin="round"/><path d="M11.300 1.500v8l-3.600 4M11.300 9.500h6" stroke="#e8640c" stroke-width="1.300"/><path d="M9.500 13.500h7l3-3.500" stroke="#f0a070" stroke-width="1"/></svg>
<svg class="b" style="left:912px;top:765px;" width="20" height="23" viewBox="0 0 20 23" fill="none"><path d="M2.800 1.500h13.800c1 0 1.600.5 1.600 1.500s-.6 1.600-1.600 1.800c-3 .5-4.300 1.500-4.300 4v5.400c0 2.500 1.300 3.500 4.300 4 1 .2 1.600.8 1.600 1.800s-.6 1.500-1.600 1.500H2.800c-1 0-1.600-.5-1.600-1.500s.6-1.600 1.600-1.800c3-.5 4.300-1.500 4.300-4V8.800c0-2.500-1.300-3.500-4.300-4-1-.2-1.600-.8-1.600-1.800s.6-1.500 1.600-1.500z" fill="#fbdcc8" stroke="#5a2e17" stroke-width="1.200" stroke-linejoin="round"/></svg>
<div class="b" style="left:938px;top:761.3px;width:30.799999999999955px;height:30.300000000000068px;background:#e8effd;border:1.400px solid #6097f1;border-radius:4.500px;"></div>
<svg class="b" style="left:942px;top:765px;" width="24" height="23" viewBox="0 0 24 23" fill="none"><rect x="1.300" y="5.500" width="11.200" height="12.200" rx="1" fill="#f5dccb" stroke="#5a2e17" stroke-width="1.300"/><path d="M14 5.500h6.500c.8 0 1.200.4 1.200 1.200v9.800c0 .8-.4 1.200-1.200 1.200H14" stroke="#5a2e17" stroke-width="1.200" stroke-dasharray="2.600 1.800"/><path d="M12.500 .8v21.400" stroke="#e8640c" stroke-width="1.700"/></svg>
<svg class="b" style="left:973px;top:765px;" width="26" height="23" viewBox="0 0 26 23" fill="none"><path d="M10.500 9L8 2.500c1-1.200 2.500-1.200 3.400-.2zM13.500 9l1-7c1.300-1 2.800-.6 3.400.6z" fill="#fdf3ec" stroke="#f0b090" stroke-width="1"/><path d="M1.800 6.500l2.400-2.400 7.200 7.300c1-.3 2-.3 3 0l6.200-5.800 2 2.300-6 6.500c.8 3-.5 5.500-3 6.500-2.700 1-5.500-.3-6.300-3-.5-1.700 0-3.400 1-4.600z" fill="#f8d5bd" stroke="#5a2e17" stroke-width="1.100" stroke-linejoin="round"/><circle cx="12" cy="16" r="2.600" fill="#fbe6d8" stroke="#e8640c" stroke-width="1.100"/><circle cx="12" cy="16" r=".9" fill="#e8640c"/></svg>
<div class="b" style="left:1002.8px;top:761.3px;width:43.200000000000045px;height:30.300000000000068px;background:#e8effd;border:1.400px solid #6097f1;border-radius:4.500px;"></div>
<div class="b" style="left:1032.8px;top:761.8px;width:1.4px;height:29.300000000000068px;background:#6097f1;"></div>
<svg class="b" style="left:1006px;top:766px;" width="24" height="21" viewBox="0 0 24 21" fill="none"><rect x="3.300" y="2.500" width="15.500" height="15.500" fill="#e9e4e1"/><path d="M1.800 1v18.500M20.400 1v18.500" stroke="#e8640c" stroke-width="1.800"/><path d="M5 9.300h12.300M7.800 6.500L5 9.300l2.800 2.800M14.500 6.500l2.800 2.800-2.800 2.800" stroke="#5a2e17" stroke-width="1.200"/><path d="M4.500 18.700h13.500" stroke="#5a2e17" stroke-width="1.600" stroke-dasharray="1 1.700"/><path d="M7.300 16v3M12.600 16v3M17.800 16v3" stroke="#5a2e17" stroke-width="1"/></svg>
<svg class="b" style="left:1034.8500000000001px;top:773.7px;" width="9.7" height="6" viewBox="0 0 9.7 6" fill="none"><path d="M1 1l3.85 4 3.85 -4" stroke="#30343c" stroke-width="1.4"/></svg>
<svg class="b" style="left:1062.8px;top:766.3px;" width="5" height="19" viewBox="0 0 5 19" fill="none"><path d="M1 0v19M3.800 0v19" stroke="#92969d" stroke-width="1.100" stroke-dasharray="1.100 1.200"/></svg>
<div class="b" style="left:1070.6px;top:761.3px;width:30.40000000000009px;height:30.300000000000068px;background:#e8effd;border:1.400px solid #6097f1;border-radius:4.500px;"></div>
<svg class="b" style="left:1073px;top:765px;" width="26" height="23" viewBox="0 0 26 23" fill="none"><path d="M6.500 2.500h14.300v14H6.500z" fill="#bfe5cb"/><path d="M3.200 20.800l3.300-4.300h14.300l-2.800 4.300z" fill="#a6d8b6"/><path d="M9 2.500h11.800v14M6.500 9v7.500h14.300M3.200 20.800h14.800l2.800-4.300M3.200 20.800v-9M3.200 20.800l3.300-4.300" stroke="#18a848" stroke-width="1.200"/><rect x="19.700" y="1.300" width="2.400" height="2.400" fill="#e8effd" stroke="#1f3d28" stroke-width="1"/><rect x="19.700" y="15.300" width="2.400" height="2.400" fill="#e8effd" stroke="#1f3d28" stroke-width="1"/><rect x="5.300" y="15.300" width="2.400" height="2.400" fill="#e8effd" stroke="#1f3d28" stroke-width="1"/><rect x="2" y="19.600" width="2.400" height="2.400" fill="#e8effd" stroke="#1f3d28" stroke-width="1"/><rect x="16.800" y="19.600" width="2.400" height="2.400" fill="#e8effd" stroke="#1f3d28" stroke-width="1"/><rect x="1.800" y="1.500" width="11.800" height="6.600" rx="3.300" fill="#2f6be8"/><circle cx="10.200" cy="4.800" r="2.400" fill="#fff"/></svg>
<svg class="b" style="left:1107px;top:766px;" width="22" height="21" viewBox="0 0 22 21" fill="none"><defs><linearGradient id="gg1" x1="0" y1="0" x2="1" y2="1"><stop offset="0" stop-color="#c9ecd4"/><stop offset="1" stop-color="#8fcaa2"/></linearGradient></defs><path d="M4.800 1h13.700c1 0 1.500.5 1.500 1.500v12.800l-3.600 4.200H2.500c-1 0-1.500-.5-1.500-1.500V5.300z" fill="url(#gg1)" stroke="#1f3d28" stroke-width="1.300" stroke-linejoin="round"/><path d="M4.800 1v14.300h15.200M4.800 15.300L1.200 19" stroke="#1f3d28" stroke-width="1.100"/></svg>
<svg class="b" style="left:1139.5px;top:766px;" width="22" height="21" viewBox="0 0 22 21" fill="none"><path d="M4.800 1h13.700c1 0 1.500.5 1.500 1.500v12.800l-3.600 4.200H2.500c-1 0-1.500-.5-1.500-1.500V5.300z" fill="#c3e8cf" stroke="#1f3d28" stroke-width="1.300" stroke-linejoin="round"/><path d="M4.800 1v14.300h15.200M4.800 15.300L1.200 19" stroke="#1f3d28" stroke-width="1.100"/><path d="M12.300 1.500v13.500M5 8.300h15M2.500 12.500l2.300-2.700M9.500 19l2.500-3.500" stroke="#18a848" stroke-width="1.300" stroke-dasharray="2.600 1.600"/></svg>
<svg class="b" style="left:1166.8px;top:769.9px;" width="9" height="13" viewBox="0 0 9 13" fill="none"><path d="M1.500 1.200l5.200 5.300-5.200 5.300" stroke="#30343c" stroke-width="1.500"/></svg>
</body></html>
